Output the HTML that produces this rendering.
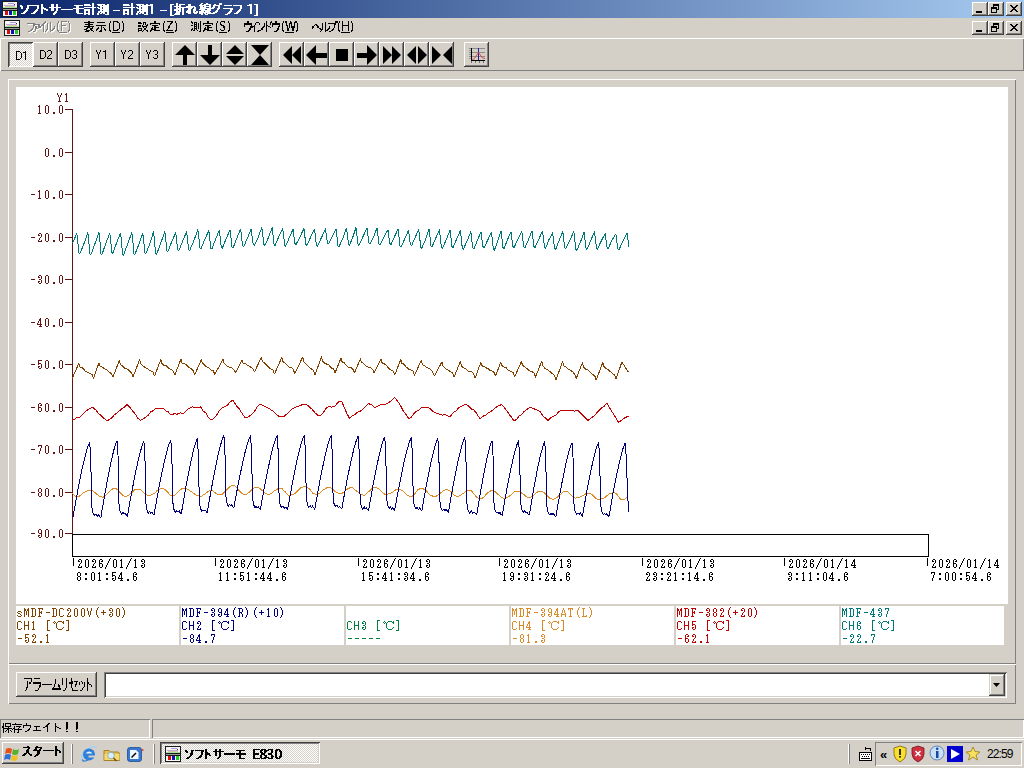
<!DOCTYPE html><html><head><meta charset="utf-8"><style>
*{margin:0;padding:0;box-sizing:border-box}
html,body{width:1024px;height:768px;overflow:hidden}
body{position:relative;background:#D4D0C8;font-family:"Liberation Sans",sans-serif;font-size:12px;color:#000}
.a{position:absolute}
.jt{position:absolute;display:block}
.t{white-space:pre;line-height:13px}
.btn{background:#D4D0C8;box-shadow:inset -1px -1px #404040,inset 1px 1px #fff,inset -2px -2px #808080}
.cbtn{background:#D4D0C8;box-shadow:inset -1px -1px #404040,inset 1px 1px #fff,inset -2px -2px #808080}
.sunk{box-shadow:inset 1px 1px #808080,inset -1px -1px #fff,inset 2px 2px #404040,inset -2px -2px #D4D0C8}
.traised{box-shadow:inset 1px 1px #fff,inset -1px -1px #808080}
.tsunk{box-shadow:inset 1px 1px #808080,inset -1px -1px #fff}
.pressed{box-shadow:inset 1px 1px #404040,inset -1px -1px #fff,inset 2px 2px #808080;background:conic-gradient(#fff 25%,#D4D0C8 0 50%,#fff 0 75%,#D4D0C8 0) 0 0/2px 2px}
.mono{font-family:"Liberation Mono",monospace;font-size:11.67px;line-height:13px;white-space:pre}
</style></head><body>

<div class="a" style="left:0px;top:0px;width:1024px;height:18px;background:linear-gradient(to right,#0A246A,#A6CAF0)"></div>
<svg class="a" style="left:2px;top:1px" width="16" height="16" shape-rendering="crispEdges">
<rect x="0" y="0" width="16" height="16" fill="#1a1a1a"/>
<rect x="1" y="1" width="14" height="6" fill="#f4f4f4"/>
<rect x="2" y="2" width="5" height="1" fill="#ffffff"/>
<rect x="6" y="2" width="6" height="1" fill="#a898d8"/>
<rect x="2" y="4" width="11" height="1" fill="#c0a8e0"/>
<rect x="3" y="5" width="10" height="1" fill="#d8c898"/>
<rect x="1" y="6" width="14" height="1" fill="#a8e0a0"/>
<rect x="12" y="3" width="1" height="1" fill="#402060"/>
<rect x="1" y="8" width="14" height="1" fill="#9a9a9a"/>
<rect x="1" y="10" width="14" height="5" fill="#f8f8f8"/>
<rect x="3" y="10" width="3" height="4" fill="#d01010"/>
<rect x="7" y="10" width="3" height="4" fill="#1010c0"/>
<rect x="11" y="10" width="3" height="4" fill="#20d020"/>
</svg>
<svg class="jt" style="left:20px;top:3px" width="238" height="13"><path fill="#fff" d="M72 0h2v1h-2zM111 0h2v1h-2zM156 0h2v1h-2zM181 0h2v1h-2zM186 0h2v1h-2zM199 0h3v1h-3zM21 1h2v1h-2zM31 1h3v1h-3zM36 1h2v1h-2zM64 1h6v1h-6zM72 1h2v1h-2zM77 1h8v1h-8zM87 1h2v1h-2zM103 1h6v1h-6zM111 1h2v1h-2zM116 1h8v1h-8zM126 1h2v1h-2zM130 1h3v1h-3zM150 1h4v1h-4zM156 1h2v1h-2zM159 1h6v1h-6zM168 1h3v1h-3zM180 1h2v1h-2zM184 1h7v1h-7zM194 1h2v1h-2zM199 1h3v1h-3zM229 1h3v1h-3zM234 1h4v1h-4zM0 2h2v1h-2zM7 2h12v1h-12zM21 2h2v1h-2zM31 2h3v1h-3zM36 2h2v1h-2zM54 2h9v1h-9zM64 2h7v1h-7zM72 2h2v1h-2zM78 2h4v1h-4zM83 2h6v1h-6zM103 2h7v1h-7zM111 2h2v1h-2zM117 2h4v1h-4zM122 2h11v1h-11zM150 2h2v1h-2zM156 2h2v1h-2zM159 2h2v1h-2zM168 2h3v1h-3zM179 2h7v1h-7zM189 2h2v1h-2zM193 2h7v1h-7zM204 2h8v1h-8zM213 2h9v1h-9zM227 2h5v1h-5zM236 2h2v1h-2zM0 3h3v1h-3zM7 3h2v1h-2zM17 3h2v1h-2zM21 3h2v1h-2zM31 3h3v1h-3zM36 3h2v1h-2zM56 3h3v1h-3zM72 3h2v1h-2zM80 3h9v1h-9zM111 3h2v1h-2zM119 3h9v1h-9zM131 3h2v1h-2zM150 3h2v1h-2zM154 3h7v1h-7zM166 3h9v1h-9zM180 3h3v1h-3zM184 3h7v1h-7zM193 3h2v1h-2zM198 3h2v1h-2zM220 3h2v1h-2zM230 3h2v1h-2zM236 3h2v1h-2zM1 4h2v1h-2zM7 4h2v1h-2zM17 4h2v1h-2zM21 4h3v1h-3zM29 4h12v1h-12zM56 4h3v1h-3zM64 4h12v1h-12zM77 4h2v1h-2zM80 4h2v1h-2zM83 4h6v1h-6zM103 4h12v1h-12zM116 4h2v1h-2zM119 4h2v1h-2zM122 4h6v1h-6zM131 4h2v1h-2zM150 4h2v1h-2zM156 4h2v1h-2zM159 4h14v1h-14zM174 4h2v1h-2zM180 4h6v1h-6zM189 4h2v1h-2zM192 4h3v1h-3zM198 4h2v1h-2zM220 4h2v1h-2zM230 4h2v1h-2zM236 4h2v1h-2zM1 5h2v1h-2zM6 5h3v1h-3zM17 5h2v1h-2zM21 5h5v1h-5zM31 5h3v1h-3zM36 5h2v1h-2zM53 5h11v1h-11zM72 5h2v1h-2zM78 5h4v1h-4zM83 5h6v1h-6zM111 5h2v1h-2zM117 5h4v1h-4zM122 5h6v1h-6zM131 5h2v1h-2zM150 5h2v1h-2zM156 5h5v1h-5zM162 5h2v1h-2zM168 5h4v1h-4zM174 5h2v1h-2zM180 5h14v1h-14zM197 5h3v1h-3zM203 5h10v1h-10zM220 5h2v1h-2zM230 5h2v1h-2zM236 5h2v1h-2zM6 6h2v1h-2zM16 6h2v1h-2zM21 6h2v1h-2zM24 6h4v1h-4zM31 6h3v1h-3zM36 6h2v1h-2zM41 6h12v1h-12zM56 6h3v1h-3zM64 6h6v1h-6zM72 6h2v1h-2zM80 6h9v1h-9zM103 6h6v1h-6zM111 6h2v1h-2zM119 6h9v1h-9zM131 6h2v1h-2zM150 6h2v1h-2zM154 6h7v1h-7zM162 6h2v1h-2zM168 6h3v1h-3zM173 6h3v1h-3zM179 6h6v1h-6zM187 6h4v1h-4zM197 6h2v1h-2zM210 6h3v1h-3zM219 6h2v1h-2zM230 6h2v1h-2zM236 6h2v1h-2zM5 7h3v1h-3zM15 7h3v1h-3zM21 7h2v1h-2zM26 7h2v1h-2zM31 7h3v1h-3zM36 7h2v1h-2zM56 7h3v1h-3zM64 7h6v1h-6zM72 7h2v1h-2zM80 7h2v1h-2zM83 7h6v1h-6zM93 7h7v1h-7zM103 7h6v1h-6zM111 7h2v1h-2zM119 7h2v1h-2zM122 7h6v1h-6zM131 7h2v1h-2zM140 7h7v1h-7zM150 7h2v1h-2zM154 7h4v1h-4zM159 7h2v1h-2zM162 7h2v1h-2zM167 7h4v1h-4zM173 7h3v1h-3zM181 7h10v1h-10zM196 7h2v1h-2zM210 7h2v1h-2zM218 7h3v1h-3zM230 7h2v1h-2zM236 7h2v1h-2zM4 8h3v1h-3zM14 8h3v1h-3zM21 8h2v1h-2zM35 8h2v1h-2zM56 8h3v1h-3zM64 8h2v1h-2zM68 8h2v1h-2zM72 8h2v1h-2zM78 8h11v1h-11zM103 8h2v1h-2zM107 8h2v1h-2zM111 8h2v1h-2zM117 8h11v1h-11zM131 8h2v1h-2zM150 8h2v1h-2zM156 8h5v1h-5zM162 8h2v1h-2zM166 8h5v1h-5zM173 8h2v1h-2zM176 8h2v1h-2zM179 8h5v1h-5zM185 8h5v1h-5zM195 8h3v1h-3zM209 8h3v1h-3zM217 8h3v1h-3zM230 8h2v1h-2zM236 8h2v1h-2zM3 9h3v1h-3zM13 9h3v1h-3zM21 9h2v1h-2zM34 9h3v1h-3zM56 9h3v1h-3zM64 9h2v1h-2zM68 9h2v1h-2zM72 9h2v1h-2zM78 9h2v1h-2zM81 9h4v1h-4zM87 9h2v1h-2zM103 9h2v1h-2zM107 9h2v1h-2zM111 9h2v1h-2zM117 9h2v1h-2zM120 9h4v1h-4zM126 9h2v1h-2zM131 9h2v1h-2zM150 9h2v1h-2zM156 9h4v1h-4zM162 9h2v1h-2zM166 9h5v1h-5zM173 9h5v1h-5zM179 9h12v1h-12zM193 9h4v1h-4zM208 9h3v1h-3zM216 9h3v1h-3zM230 9h2v1h-2zM236 9h2v1h-2zM1 10h4v1h-4zM11 10h4v1h-4zM21 10h2v1h-2zM33 10h3v1h-3zM57 10h6v1h-6zM64 10h6v1h-6zM72 10h2v1h-2zM77 10h2v1h-2zM80 10h2v1h-2zM83 10h2v1h-2zM87 10h2v1h-2zM103 10h6v1h-6zM111 10h2v1h-2zM116 10h2v1h-2zM119 10h2v1h-2zM122 10h2v1h-2zM126 10h2v1h-2zM131 10h2v1h-2zM150 10h2v1h-2zM155 10h5v1h-5zM162 10h2v1h-2zM168 10h3v1h-3zM174 10h3v1h-3zM179 10h4v1h-4zM184 10h2v1h-2zM187 10h8v1h-8zM207 10h3v1h-3zM214 10h4v1h-4zM230 10h2v1h-2zM236 10h2v1h-2zM33 11h2v1h-2zM64 11h2v1h-2zM68 11h2v1h-2zM72 11h2v1h-2zM77 11h2v1h-2zM85 11h4v1h-4zM103 11h2v1h-2zM107 11h2v1h-2zM111 11h2v1h-2zM116 11h2v1h-2zM124 11h4v1h-4zM150 11h2v1h-2zM154 11h6v1h-6zM162 11h2v1h-2zM181 11h2v1h-2zM185 11h3v1h-3zM205 11h3v1h-3zM236 11h2v1h-2zM150 12h4v1h-4zM234 12h4v1h-4z"/></svg>
<div class="a cbtn" style="left:972px;top:2px;width:16px;height:14px"></div>
<svg class="a" style="left:972px;top:2px" width="16" height="14" shape-rendering="crispEdges"><rect x="4" y="9" width="6" height="2" fill="#000"/></svg>
<div class="a cbtn" style="left:988px;top:2px;width:16px;height:14px"></div>
<svg class="a" style="left:988px;top:2px" width="16" height="14" shape-rendering="crispEdges"><rect x="5" y="2" width="6" height="2" fill="#000"/><rect x="10" y="4" width="1" height="4" fill="#000"/><rect x="9" y="7" width="1" height="1" fill="#000"/><rect x="5" y="4" width="1" height="1" fill="#000"/><rect x="3" y="5" width="6" height="2" fill="#000"/><rect x="3" y="7" width="1" height="4" fill="#000"/><rect x="8" y="7" width="1" height="4" fill="#000"/><rect x="3" y="10" width="6" height="1" fill="#000"/></svg>
<div class="a cbtn" style="left:1006px;top:2px;width:16px;height:14px"></div>
<svg class="a" style="left:1006px;top:2px" width="16" height="14" shape-rendering="crispEdges"><rect x="4" y="3" width="1" height="1" fill="#000"/><rect x="5" y="3" width="1" height="1" fill="#000"/><rect x="10" y="3" width="1" height="1" fill="#000"/><rect x="11" y="3" width="1" height="1" fill="#000"/><rect x="5" y="4" width="1" height="1" fill="#000"/><rect x="6" y="4" width="1" height="1" fill="#000"/><rect x="9" y="4" width="1" height="1" fill="#000"/><rect x="10" y="4" width="1" height="1" fill="#000"/><rect x="6" y="5" width="1" height="1" fill="#000"/><rect x="7" y="5" width="1" height="1" fill="#000"/><rect x="8" y="5" width="1" height="1" fill="#000"/><rect x="9" y="5" width="1" height="1" fill="#000"/><rect x="7" y="6" width="1" height="1" fill="#000"/><rect x="8" y="6" width="1" height="1" fill="#000"/><rect x="6" y="7" width="1" height="1" fill="#000"/><rect x="7" y="7" width="1" height="1" fill="#000"/><rect x="8" y="7" width="1" height="1" fill="#000"/><rect x="9" y="7" width="1" height="1" fill="#000"/><rect x="5" y="8" width="1" height="1" fill="#000"/><rect x="6" y="8" width="1" height="1" fill="#000"/><rect x="9" y="8" width="1" height="1" fill="#000"/><rect x="10" y="8" width="1" height="1" fill="#000"/><rect x="4" y="9" width="1" height="1" fill="#000"/><rect x="5" y="9" width="1" height="1" fill="#000"/><rect x="10" y="9" width="1" height="1" fill="#000"/><rect x="11" y="9" width="1" height="1" fill="#000"/></svg>
<svg class="a" style="left:4px;top:20px" width="16" height="16" shape-rendering="crispEdges">
<rect x="0" y="0" width="16" height="16" fill="#1a1a1a"/>
<rect x="1" y="1" width="14" height="6" fill="#f4f4f4"/>
<rect x="2" y="2" width="5" height="1" fill="#ffffff"/>
<rect x="6" y="2" width="6" height="1" fill="#a898d8"/>
<rect x="2" y="4" width="11" height="1" fill="#c0a8e0"/>
<rect x="3" y="5" width="10" height="1" fill="#d8c898"/>
<rect x="1" y="6" width="14" height="1" fill="#a8e0a0"/>
<rect x="12" y="3" width="1" height="1" fill="#402060"/>
<rect x="1" y="8" width="14" height="1" fill="#9a9a9a"/>
<rect x="1" y="10" width="14" height="5" fill="#f8f8f8"/>
<rect x="3" y="10" width="3" height="4" fill="#d01010"/>
<rect x="7" y="10" width="3" height="4" fill="#1010c0"/>
<rect x="11" y="10" width="3" height="4" fill="#20d020"/>
</svg>
<svg class="jt" style="left:28px;top:22px" width="28" height="11"><path fill="#fff" d="M18 0h1v1h-1zM17 1h2v1h-2zM23 1h1v1h-1zM0 2h8v1h-8zM16 2h2v1h-2zM20 2h1v1h-1zM23 2h1v1h-1zM6 3h7v1h-7zM15 3h2v1h-2zM20 3h1v1h-1zM23 3h1v1h-1zM6 4h2v1h-2zM11 4h2v1h-2zM14 4h3v1h-3zM20 4h1v1h-1zM23 4h1v1h-1zM6 5h1v1h-1zM8 5h2v1h-2zM11 5h3v1h-3zM16 5h1v1h-1zM20 5h1v1h-1zM23 5h1v1h-1zM27 5h1v1h-1zM6 6h1v1h-1zM8 6h2v1h-2zM11 6h3v1h-3zM16 6h1v1h-1zM20 6h1v1h-1zM23 6h1v1h-1zM27 6h1v1h-1zM5 7h1v1h-1zM8 7h3v1h-3zM16 7h1v1h-1zM20 7h1v1h-1zM23 7h1v1h-1zM26 7h2v1h-2zM4 8h2v1h-2zM8 8h1v1h-1zM16 8h1v1h-1zM19 8h2v1h-2zM23 8h1v1h-1zM25 8h2v1h-2zM3 9h2v1h-2zM8 9h1v1h-1zM16 9h1v1h-1zM19 9h1v1h-1zM23 9h3v1h-3zM1 10h2v1h-2zM6 10h2v1h-2zM16 10h1v1h-1zM18 10h1v1h-1zM23 10h1v1h-1z"/></svg>
<svg class="jt" style="left:58px;top:22px" width="13" height="11"><path fill="#fff" d="M1 0h1v1h-1zM4 0h6v1h-6zM11 0h1v1h-1zM1 1h1v1h-1zM4 1h1v1h-1zM11 1h1v1h-1zM0 2h1v1h-1zM4 2h1v1h-1zM12 2h1v1h-1zM0 3h1v1h-1zM4 3h1v1h-1zM12 3h1v1h-1zM0 4h1v1h-1zM4 4h5v1h-5zM12 4h1v1h-1zM0 5h1v1h-1zM4 5h1v1h-1zM12 5h1v1h-1zM0 6h1v1h-1zM4 6h1v1h-1zM12 6h1v1h-1zM0 7h1v1h-1zM4 7h1v1h-1zM12 7h1v1h-1zM0 8h1v1h-1zM4 8h1v1h-1zM12 8h1v1h-1zM0 9h2v1h-2zM4 9h1v1h-1zM11 9h2v1h-2zM1 10h1v1h-1zM11 10h1v1h-1z"/></svg>
<div class="a" style="left:60px;top:33px;width:8px;height:1px;background:#fff"></div>
<svg class="jt" style="left:27px;top:21px" width="28" height="11"><path fill="#808080" d="M18 0h1v1h-1zM17 1h2v1h-2zM23 1h1v1h-1zM0 2h8v1h-8zM16 2h2v1h-2zM20 2h1v1h-1zM23 2h1v1h-1zM6 3h7v1h-7zM15 3h2v1h-2zM20 3h1v1h-1zM23 3h1v1h-1zM6 4h2v1h-2zM11 4h2v1h-2zM14 4h3v1h-3zM20 4h1v1h-1zM23 4h1v1h-1zM6 5h1v1h-1zM8 5h2v1h-2zM11 5h3v1h-3zM16 5h1v1h-1zM20 5h1v1h-1zM23 5h1v1h-1zM27 5h1v1h-1zM6 6h1v1h-1zM8 6h2v1h-2zM11 6h3v1h-3zM16 6h1v1h-1zM20 6h1v1h-1zM23 6h1v1h-1zM27 6h1v1h-1zM5 7h1v1h-1zM8 7h3v1h-3zM16 7h1v1h-1zM20 7h1v1h-1zM23 7h1v1h-1zM26 7h2v1h-2zM4 8h2v1h-2zM8 8h1v1h-1zM16 8h1v1h-1zM19 8h2v1h-2zM23 8h1v1h-1zM25 8h2v1h-2zM3 9h2v1h-2zM8 9h1v1h-1zM16 9h1v1h-1zM19 9h1v1h-1zM23 9h3v1h-3zM1 10h2v1h-2zM6 10h2v1h-2zM16 10h1v1h-1zM18 10h1v1h-1zM23 10h1v1h-1z"/></svg>
<svg class="jt" style="left:57px;top:21px" width="13" height="11"><path fill="#808080" d="M1 0h1v1h-1zM4 0h6v1h-6zM11 0h1v1h-1zM1 1h1v1h-1zM4 1h1v1h-1zM11 1h1v1h-1zM0 2h1v1h-1zM4 2h1v1h-1zM12 2h1v1h-1zM0 3h1v1h-1zM4 3h1v1h-1zM12 3h1v1h-1zM0 4h1v1h-1zM4 4h5v1h-5zM12 4h1v1h-1zM0 5h1v1h-1zM4 5h1v1h-1zM12 5h1v1h-1zM0 6h1v1h-1zM4 6h1v1h-1zM12 6h1v1h-1zM0 7h1v1h-1zM4 7h1v1h-1zM12 7h1v1h-1zM0 8h1v1h-1zM4 8h1v1h-1zM12 8h1v1h-1zM0 9h2v1h-2zM4 9h1v1h-1zM11 9h2v1h-2zM1 10h1v1h-1zM11 10h1v1h-1z"/></svg>
<div class="a" style="left:59px;top:32px;width:8px;height:1px;background:#808080"></div>
<svg class="jt" style="left:84px;top:21px" width="22" height="11"><path fill="#000" d="M4 0h2v1h-2zM0 1h10v1h-10zM13 1h8v1h-8zM4 2h2v1h-2zM1 3h8v1h-8zM4 4h2v1h-2zM12 4h10v1h-10zM0 5h10v1h-10zM17 5h1v1h-1zM3 6h3v1h-3zM8 6h1v1h-1zM14 6h1v1h-1zM17 6h1v1h-1zM19 6h1v1h-1zM2 7h2v1h-2zM6 7h3v1h-3zM13 7h2v1h-2zM17 7h1v1h-1zM20 7h1v1h-1zM0 8h3v1h-3zM6 8h2v1h-2zM12 8h2v1h-2zM17 8h1v1h-1zM20 8h2v1h-2zM2 9h4v1h-4zM7 9h2v1h-2zM12 9h1v1h-1zM16 9h2v1h-2zM21 9h1v1h-1zM1 10h4v1h-4zM9 10h1v1h-1zM15 10h3v1h-3z"/></svg>
<svg class="jt" style="left:109px;top:21px" width="15" height="11"><path fill="#000" d="M1 0h1v1h-1zM4 0h5v1h-5zM13 0h1v1h-1zM1 1h1v1h-1zM4 1h1v1h-1zM8 1h2v1h-2zM13 1h1v1h-1zM0 2h1v1h-1zM4 2h1v1h-1zM10 2h1v1h-1zM14 2h1v1h-1zM0 3h1v1h-1zM4 3h1v1h-1zM10 3h1v1h-1zM14 3h1v1h-1zM0 4h1v1h-1zM4 4h1v1h-1zM10 4h1v1h-1zM14 4h1v1h-1zM0 5h1v1h-1zM4 5h1v1h-1zM10 5h1v1h-1zM14 5h1v1h-1zM0 6h1v1h-1zM4 6h1v1h-1zM10 6h1v1h-1zM14 6h1v1h-1zM0 7h1v1h-1zM4 7h1v1h-1zM10 7h1v1h-1zM14 7h1v1h-1zM0 8h1v1h-1zM4 8h1v1h-1zM8 8h2v1h-2zM14 8h1v1h-1zM0 9h2v1h-2zM4 9h5v1h-5zM13 9h2v1h-2zM1 10h1v1h-1zM13 10h1v1h-1z"/></svg>
<div class="a" style="left:112px;top:32px;width:8px;height:1px;background:#000"></div>
<svg class="jt" style="left:138px;top:21px" width="22" height="11"><path fill="#000" d="M16 0h2v1h-2zM0 1h3v1h-3zM5 1h3v1h-3zM16 1h2v1h-2zM0 2h4v1h-4zM5 2h1v1h-1zM7 2h1v1h-1zM12 2h10v1h-10zM5 3h1v1h-1zM7 3h1v1h-1zM9 3h1v1h-1zM12 3h1v1h-1zM21 3h1v1h-1zM0 4h3v1h-3zM4 4h1v1h-1zM8 4h2v1h-2zM14 4h6v1h-6zM0 5h3v1h-3zM4 5h5v1h-5zM16 5h2v1h-2zM5 6h1v1h-1zM8 6h1v1h-1zM14 6h1v1h-1zM16 6h5v1h-5zM0 7h4v1h-4zM6 7h2v1h-2zM13 7h2v1h-2zM16 7h2v1h-2zM0 8h1v1h-1zM3 8h1v1h-1zM6 8h2v1h-2zM13 8h5v1h-5zM0 9h4v1h-4zM5 9h1v1h-1zM8 9h2v1h-2zM12 9h2v1h-2zM16 9h6v1h-6zM0 10h1v1h-1zM4 10h1v1h-1zM9 10h1v1h-1zM12 10h1v1h-1z"/></svg>
<svg class="jt" style="left:163px;top:21px" width="14" height="11"><path fill="#000" d="M1 0h1v1h-1zM4 0h6v1h-6zM12 0h1v1h-1zM1 1h1v1h-1zM8 1h2v1h-2zM12 1h1v1h-1zM0 2h1v1h-1zM7 2h2v1h-2zM13 2h1v1h-1zM0 3h1v1h-1zM7 3h1v1h-1zM13 3h1v1h-1zM0 4h1v1h-1zM6 4h1v1h-1zM13 4h1v1h-1zM0 5h1v1h-1zM5 5h2v1h-2zM13 5h1v1h-1zM0 6h1v1h-1zM5 6h2v1h-2zM13 6h1v1h-1zM0 7h1v1h-1zM5 7h1v1h-1zM13 7h1v1h-1zM0 8h1v1h-1zM4 8h1v1h-1zM13 8h1v1h-1zM0 9h2v1h-2zM3 9h7v1h-7zM12 9h2v1h-2zM1 10h1v1h-1zM12 10h1v1h-1z"/></svg>
<div class="a" style="left:166px;top:32px;width:8px;height:1px;background:#000"></div>
<svg class="jt" style="left:191px;top:21px" width="22" height="11"><path fill="#000" d="M0 0h1v1h-1zM9 0h1v1h-1zM16 0h2v1h-2zM0 1h2v1h-2zM3 1h3v1h-3zM9 1h1v1h-1zM16 1h2v1h-2zM1 2h1v1h-1zM3 2h1v1h-1zM5 2h1v1h-1zM7 2h1v1h-1zM9 2h1v1h-1zM12 2h10v1h-10zM3 3h3v1h-3zM7 3h1v1h-1zM9 3h1v1h-1zM12 3h1v1h-1zM21 3h1v1h-1zM0 4h2v1h-2zM3 4h1v1h-1zM5 4h1v1h-1zM7 4h1v1h-1zM9 4h1v1h-1zM14 4h6v1h-6zM3 5h3v1h-3zM7 5h1v1h-1zM9 5h1v1h-1zM16 5h2v1h-2zM3 6h1v1h-1zM5 6h1v1h-1zM7 6h1v1h-1zM9 6h1v1h-1zM14 6h1v1h-1zM16 6h5v1h-5zM1 7h1v1h-1zM3 7h3v1h-3zM7 7h1v1h-1zM9 7h1v1h-1zM13 7h2v1h-2zM16 7h2v1h-2zM0 8h2v1h-2zM3 8h1v1h-1zM5 8h1v1h-1zM9 8h1v1h-1zM13 8h5v1h-5zM0 9h1v1h-1zM2 9h2v1h-2zM6 9h1v1h-1zM9 9h1v1h-1zM12 9h2v1h-2zM16 9h6v1h-6zM8 10h2v1h-2zM12 10h1v1h-1z"/></svg>
<svg class="jt" style="left:216px;top:21px" width="14" height="11"><path fill="#000" d="M1 0h1v1h-1zM5 0h4v1h-4zM12 0h1v1h-1zM1 1h1v1h-1zM4 1h1v1h-1zM8 1h1v1h-1zM12 1h1v1h-1zM0 2h1v1h-1zM4 2h1v1h-1zM13 2h1v1h-1zM0 3h1v1h-1zM4 3h2v1h-2zM13 3h1v1h-1zM0 4h1v1h-1zM5 4h3v1h-3zM13 4h1v1h-1zM0 5h1v1h-1zM7 5h2v1h-2zM13 5h1v1h-1zM0 6h1v1h-1zM7 6h2v1h-2zM13 6h1v1h-1zM0 7h1v1h-1zM8 7h1v1h-1zM13 7h1v1h-1zM0 8h1v1h-1zM4 8h1v1h-1zM8 8h1v1h-1zM13 8h1v1h-1zM0 9h2v1h-2zM5 9h3v1h-3zM12 9h2v1h-2zM1 10h1v1h-1zM12 10h1v1h-1z"/></svg>
<div class="a" style="left:219px;top:32px;width:8px;height:1px;background:#000"></div>
<svg class="jt" style="left:244px;top:21px" width="36" height="11"><path fill="#000" d="M3 0h2v1h-2zM22 0h1v1h-1zM27 0h1v1h-1zM31 0h2v1h-2zM3 1h2v1h-2zM12 1h3v1h-3zM22 1h1v1h-1zM26 1h2v1h-2zM31 1h2v1h-2zM0 2h8v1h-8zM11 2h1v1h-1zM15 2h1v1h-1zM20 2h1v1h-1zM22 2h1v1h-1zM26 2h1v1h-1zM28 2h8v1h-8zM0 3h8v1h-8zM11 3h1v1h-1zM15 3h1v1h-1zM20 3h1v1h-1zM22 3h1v1h-1zM26 3h1v1h-1zM28 3h8v1h-8zM0 4h1v1h-1zM7 4h1v1h-1zM10 4h1v1h-1zM20 4h1v1h-1zM22 4h2v1h-2zM28 4h1v1h-1zM35 4h1v1h-1zM0 5h1v1h-1zM6 5h5v1h-5zM19 5h2v1h-2zM22 5h1v1h-1zM24 5h2v1h-2zM28 5h1v1h-1zM34 5h2v1h-2zM6 6h3v1h-3zM10 6h1v1h-1zM18 6h2v1h-2zM22 6h1v1h-1zM26 6h1v1h-1zM34 6h1v1h-1zM5 7h2v1h-2zM10 7h1v1h-1zM17 7h2v1h-2zM22 7h1v1h-1zM33 7h2v1h-2zM5 8h2v1h-2zM10 8h1v1h-1zM17 8h2v1h-2zM22 8h1v1h-1zM33 8h2v1h-2zM4 9h2v1h-2zM10 9h1v1h-1zM14 9h3v1h-3zM22 9h1v1h-1zM32 9h2v1h-2zM2 10h3v1h-3zM10 10h1v1h-1zM13 10h2v1h-2zM22 10h1v1h-1zM30 10h3v1h-3z"/></svg>
<svg class="jt" style="left:282px;top:21px" width="16" height="11"><path fill="#000" d="M1 0h1v1h-1zM3 0h2v1h-2zM8 0h1v1h-1zM13 0h2v1h-2zM1 1h1v1h-1zM3 1h2v1h-2zM8 1h2v1h-2zM12 1h3v1h-3zM0 2h1v1h-1zM4 2h1v1h-1zM7 2h3v1h-3zM12 2h1v1h-1zM15 2h1v1h-1zM0 3h1v1h-1zM4 3h1v1h-1zM7 3h1v1h-1zM9 3h1v1h-1zM12 3h1v1h-1zM15 3h1v1h-1zM0 4h1v1h-1zM4 4h2v1h-2zM7 4h1v1h-1zM9 4h1v1h-1zM12 4h1v1h-1zM15 4h1v1h-1zM0 5h1v1h-1zM5 5h1v1h-1zM7 5h1v1h-1zM9 5h4v1h-4zM15 5h1v1h-1zM0 6h1v1h-1zM5 6h1v1h-1zM7 6h1v1h-1zM9 6h4v1h-4zM15 6h1v1h-1zM0 7h1v1h-1zM5 7h2v1h-2zM10 7h2v1h-2zM15 7h1v1h-1zM0 8h1v1h-1zM5 8h2v1h-2zM10 8h2v1h-2zM15 8h1v1h-1zM0 9h2v1h-2zM5 9h2v1h-2zM10 9h2v1h-2zM14 9h2v1h-2zM1 10h1v1h-1zM14 10h1v1h-1z"/></svg>
<div class="a" style="left:285px;top:32px;width:9px;height:1px;background:#000"></div>
<svg class="jt" style="left:312px;top:21px" width="26" height="11"><path fill="#000" d="M23 0h3v1h-3zM13 1h1v1h-1zM23 1h3v1h-3zM10 2h1v1h-1zM13 2h1v1h-1zM16 2h8v1h-8zM3 3h2v1h-2zM10 3h1v1h-1zM13 3h1v1h-1zM22 3h2v1h-2zM2 4h1v1h-1zM4 4h2v1h-2zM10 4h1v1h-1zM13 4h1v1h-1zM22 4h1v1h-1zM0 5h2v1h-2zM5 5h2v1h-2zM10 5h1v1h-1zM13 5h1v1h-1zM17 5h1v1h-1zM22 5h1v1h-1zM0 6h2v1h-2zM5 6h2v1h-2zM10 6h1v1h-1zM13 6h1v1h-1zM17 6h1v1h-1zM22 6h1v1h-1zM0 7h1v1h-1zM7 7h2v1h-2zM10 7h1v1h-1zM13 7h1v1h-1zM16 7h2v1h-2zM21 7h1v1h-1zM8 8h3v1h-3zM13 8h1v1h-1zM15 8h2v1h-2zM20 8h2v1h-2zM9 9h1v1h-1zM13 9h3v1h-3zM19 9h2v1h-2zM8 10h1v1h-1zM13 10h1v1h-1zM17 10h2v1h-2z"/></svg>
<svg class="jt" style="left:338px;top:21px" width="15" height="11"><path fill="#000" d="M1 0h1v1h-1zM4 0h1v1h-1zM10 0h1v1h-1zM13 0h1v1h-1zM1 1h1v1h-1zM4 1h1v1h-1zM10 1h1v1h-1zM13 1h1v1h-1zM0 2h1v1h-1zM4 2h1v1h-1zM10 2h1v1h-1zM14 2h1v1h-1zM0 3h1v1h-1zM4 3h1v1h-1zM10 3h1v1h-1zM14 3h1v1h-1zM0 4h1v1h-1zM4 4h7v1h-7zM14 4h1v1h-1zM0 5h1v1h-1zM4 5h1v1h-1zM10 5h1v1h-1zM14 5h1v1h-1zM0 6h1v1h-1zM4 6h1v1h-1zM10 6h1v1h-1zM14 6h1v1h-1zM0 7h1v1h-1zM4 7h1v1h-1zM10 7h1v1h-1zM14 7h1v1h-1zM0 8h1v1h-1zM4 8h1v1h-1zM10 8h1v1h-1zM14 8h1v1h-1zM0 9h2v1h-2zM4 9h1v1h-1zM10 9h1v1h-1zM13 9h2v1h-2zM1 10h1v1h-1zM13 10h1v1h-1z"/></svg>
<div class="a" style="left:341px;top:32px;width:9px;height:1px;background:#000"></div>
<div class="a cbtn" style="left:972px;top:21px;width:16px;height:14px"></div>
<svg class="a" style="left:972px;top:21px" width="16" height="14" shape-rendering="crispEdges"><rect x="4" y="9" width="6" height="2" fill="#000"/></svg>
<div class="a cbtn" style="left:988px;top:21px;width:16px;height:14px"></div>
<svg class="a" style="left:988px;top:21px" width="16" height="14" shape-rendering="crispEdges"><rect x="5" y="2" width="6" height="2" fill="#000"/><rect x="10" y="4" width="1" height="4" fill="#000"/><rect x="9" y="7" width="1" height="1" fill="#000"/><rect x="5" y="4" width="1" height="1" fill="#000"/><rect x="3" y="5" width="6" height="2" fill="#000"/><rect x="3" y="7" width="1" height="4" fill="#000"/><rect x="8" y="7" width="1" height="4" fill="#000"/><rect x="3" y="10" width="6" height="1" fill="#000"/></svg>
<div class="a cbtn" style="left:1006px;top:21px;width:16px;height:14px"></div>
<svg class="a" style="left:1006px;top:21px" width="16" height="14" shape-rendering="crispEdges"><rect x="4" y="3" width="1" height="1" fill="#000"/><rect x="5" y="3" width="1" height="1" fill="#000"/><rect x="10" y="3" width="1" height="1" fill="#000"/><rect x="11" y="3" width="1" height="1" fill="#000"/><rect x="5" y="4" width="1" height="1" fill="#000"/><rect x="6" y="4" width="1" height="1" fill="#000"/><rect x="9" y="4" width="1" height="1" fill="#000"/><rect x="10" y="4" width="1" height="1" fill="#000"/><rect x="6" y="5" width="1" height="1" fill="#000"/><rect x="7" y="5" width="1" height="1" fill="#000"/><rect x="8" y="5" width="1" height="1" fill="#000"/><rect x="9" y="5" width="1" height="1" fill="#000"/><rect x="7" y="6" width="1" height="1" fill="#000"/><rect x="8" y="6" width="1" height="1" fill="#000"/><rect x="6" y="7" width="1" height="1" fill="#000"/><rect x="7" y="7" width="1" height="1" fill="#000"/><rect x="8" y="7" width="1" height="1" fill="#000"/><rect x="9" y="7" width="1" height="1" fill="#000"/><rect x="5" y="8" width="1" height="1" fill="#000"/><rect x="6" y="8" width="1" height="1" fill="#000"/><rect x="9" y="8" width="1" height="1" fill="#000"/><rect x="10" y="8" width="1" height="1" fill="#000"/><rect x="4" y="9" width="1" height="1" fill="#000"/><rect x="5" y="9" width="1" height="1" fill="#000"/><rect x="10" y="9" width="1" height="1" fill="#000"/><rect x="11" y="9" width="1" height="1" fill="#000"/></svg>
<div class="a traised" style="left:0px;top:38px;width:1024px;height:33px;"></div>
<div class="a pressed" style="left:8px;top:42px;width:25px;height:25px"></div>
<div class="a btn" style="left:33px;top:42px;width:25px;height:25px;"></div>
<div class="a btn" style="left:58px;top:42px;width:25px;height:25px;"></div>
<div class="a btn" style="left:90px;top:42px;width:25px;height:25px;"></div>
<div class="a btn" style="left:115px;top:42px;width:25px;height:25px;"></div>
<div class="a btn" style="left:140px;top:42px;width:25px;height:25px;"></div>
<div class="a btn" style="left:172px;top:42px;width:25px;height:25px;"></div>
<div class="a btn" style="left:197px;top:42px;width:25px;height:25px;"></div>
<div class="a btn" style="left:222px;top:42px;width:25px;height:25px;"></div>
<div class="a btn" style="left:247px;top:42px;width:25px;height:25px;"></div>
<div class="a btn" style="left:279px;top:42px;width:25px;height:25px;"></div>
<div class="a btn" style="left:304px;top:42px;width:25px;height:25px;"></div>
<div class="a btn" style="left:329px;top:42px;width:25px;height:25px;"></div>
<div class="a btn" style="left:354px;top:42px;width:25px;height:25px;"></div>
<div class="a btn" style="left:379px;top:42px;width:25px;height:25px;"></div>
<div class="a btn" style="left:404px;top:42px;width:25px;height:25px;"></div>
<div class="a btn" style="left:429px;top:42px;width:25px;height:25px;"></div>
<div class="a btn" style="left:464px;top:42px;width:25px;height:25px;"></div>
<svg class="jt" style="left:16px;top:50px" width="142" height="10"><path fill="#000" d="M24 0h4v1h-4zM32 0h3v1h-3zM49 0h4v1h-4zM57 0h3v1h-3zM80 0h1v1h-1zM84 0h1v1h-1zM89 0h1v1h-1zM105 0h1v1h-1zM109 0h1v1h-1zM113 0h3v1h-3zM130 0h1v1h-1zM134 0h1v1h-1zM138 0h3v1h-3zM0 1h4v1h-4zM9 1h1v1h-1zM24 1h1v1h-1zM28 1h1v1h-1zM31 1h1v1h-1zM35 1h1v1h-1zM49 1h1v1h-1zM53 1h1v1h-1zM56 1h1v1h-1zM60 1h1v1h-1zM80 1h1v1h-1zM84 1h1v1h-1zM87 1h3v1h-3zM105 1h1v1h-1zM109 1h1v1h-1zM112 1h1v1h-1zM116 1h1v1h-1zM130 1h1v1h-1zM134 1h1v1h-1zM137 1h1v1h-1zM141 1h1v1h-1zM0 2h1v1h-1zM4 2h1v1h-1zM7 2h3v1h-3zM24 2h1v1h-1zM29 2h1v1h-1zM35 2h1v1h-1zM49 2h1v1h-1zM54 2h1v1h-1zM60 2h1v1h-1zM81 2h1v1h-1zM83 2h1v1h-1zM89 2h1v1h-1zM106 2h1v1h-1zM108 2h1v1h-1zM116 2h1v1h-1zM131 2h1v1h-1zM133 2h1v1h-1zM141 2h1v1h-1zM0 3h1v1h-1zM5 3h1v1h-1zM9 3h1v1h-1zM24 3h1v1h-1zM29 3h1v1h-1zM35 3h1v1h-1zM49 3h1v1h-1zM54 3h1v1h-1zM60 3h1v1h-1zM81 3h1v1h-1zM83 3h1v1h-1zM89 3h1v1h-1zM106 3h1v1h-1zM108 3h1v1h-1zM116 3h1v1h-1zM131 3h1v1h-1zM133 3h1v1h-1zM141 3h1v1h-1zM0 4h1v1h-1zM5 4h1v1h-1zM9 4h1v1h-1zM24 4h1v1h-1zM29 4h1v1h-1zM34 4h1v1h-1zM49 4h1v1h-1zM54 4h1v1h-1zM58 4h2v1h-2zM82 4h1v1h-1zM89 4h1v1h-1zM107 4h1v1h-1zM115 4h1v1h-1zM132 4h1v1h-1zM139 4h2v1h-2zM0 5h1v1h-1zM5 5h1v1h-1zM9 5h1v1h-1zM24 5h1v1h-1zM29 5h1v1h-1zM33 5h1v1h-1zM49 5h1v1h-1zM54 5h1v1h-1zM60 5h1v1h-1zM82 5h1v1h-1zM89 5h1v1h-1zM107 5h1v1h-1zM114 5h1v1h-1zM132 5h1v1h-1zM141 5h1v1h-1zM0 6h1v1h-1zM5 6h1v1h-1zM9 6h1v1h-1zM24 6h1v1h-1zM29 6h1v1h-1zM32 6h1v1h-1zM49 6h1v1h-1zM54 6h1v1h-1zM60 6h1v1h-1zM82 6h1v1h-1zM89 6h1v1h-1zM107 6h1v1h-1zM113 6h1v1h-1zM132 6h1v1h-1zM141 6h1v1h-1zM0 7h1v1h-1zM5 7h1v1h-1zM9 7h1v1h-1zM24 7h1v1h-1zM28 7h1v1h-1zM31 7h1v1h-1zM49 7h1v1h-1zM53 7h1v1h-1zM56 7h1v1h-1zM60 7h1v1h-1zM82 7h1v1h-1zM89 7h1v1h-1zM107 7h1v1h-1zM112 7h1v1h-1zM132 7h1v1h-1zM137 7h1v1h-1zM141 7h1v1h-1zM0 8h1v1h-1zM4 8h1v1h-1zM9 8h1v1h-1zM24 8h4v1h-4zM31 8h5v1h-5zM49 8h4v1h-4zM57 8h3v1h-3zM82 8h1v1h-1zM89 8h1v1h-1zM107 8h1v1h-1zM112 8h5v1h-5zM132 8h1v1h-1zM138 8h3v1h-3zM0 9h4v1h-4zM9 9h1v1h-1z"/></svg>
<svg class="a" style="left:0;top:0" width="1024" height="80"><g fill="#000">
<path d="M175 55 L185 45 L195 55 Z M183 55 h4 v10 h-4 Z"/>
<path d="M200 55 L220 55 L210 65 Z M208 45 h4 v10 h-4 Z"/>
<path d="M226 54 L235 45 L244 54 Z M226 56 L244 56 L235 65 Z"/>
<path d="M251 45 L269 45 L260 55 Z M251 65 L269 65 L260 55 Z"/>
<path d="M283 55 L292 46 L292 64 Z M292 55 L301 46 L301 64 Z"/>
<path d="M306 55 L316 45 L316 65 Z M316 53 h11 v5 h-11 Z"/>
<path d="M336 49 h12 v12 h-12 Z"/>
<path d="M357 53 h10 v5 h-10 Z M367 45 L377 55 L367 65 Z"/>
<path d="M383 46 L392 55 L383 64 Z M392 46 L401 55 L392 64 Z"/>
<path d="M407 55 L416 46 L416 64 Z M418 46 L427 55 L418 64 Z"/>
<path d="M432 46 L441 55 L432 64 Z M452 46 L443 55 L452 64 Z"/>
</g><g shape-rendering="crispEdges"><rect x="469" y="48" width="16" height="1" fill="#8a8a8a"/><rect x="469" y="52" width="16" height="1" fill="#8a8a8a"/><rect x="469" y="56" width="16" height="1" fill="#8a8a8a"/><rect x="469" y="50" width="2" height="1" fill="#9a9a9a"/><rect x="469" y="54" width="2" height="1" fill="#9a9a9a"/><rect x="469" y="58" width="2" height="1" fill="#9a9a9a"/><rect x="471" y="48" width="1" height="13" fill="#000"/><rect x="471" y="60" width="14" height="1" fill="#000"/><rect x="471" y="61" width="1" height="2" fill="#707070"/><rect x="475" y="61" width="1" height="2" fill="#707070"/><rect x="479" y="61" width="1" height="2" fill="#707070"/><rect x="483" y="61" width="1" height="2" fill="#707070"/><rect x="478" y="48" width="1" height="12" fill="#20209a"/></g><path d="M472 59.5 L474.5 58.5 L478.5 52.5 L482.5 58 L485 58.5" stroke="#e04848" fill="none" stroke-width="1"/></svg>
<div class="a traised" style="left:8px;top:79px;width:1008px;height:585px;"></div>
<div class="a" style="left:16px;top:87px;width:992px;height:517px;background:#fff"></div>
<div class="a" style="left:16px;top:606px;width:163px;height:39px;background:#fff"></div>
<div class="a" style="left:181px;top:606px;width:163px;height:39px;background:#fff"></div>
<div class="a" style="left:346px;top:606px;width:163px;height:39px;background:#fff"></div>
<div class="a" style="left:511px;top:606px;width:163px;height:39px;background:#fff"></div>
<div class="a" style="left:676px;top:606px;width:163px;height:39px;background:#fff"></div>
<div class="a" style="left:841px;top:606px;width:163px;height:39px;background:#fff"></div>
<div class="a traised" style="left:8px;top:664px;width:1008px;height:40px;"></div>
<div class="a btn" style="left:16px;top:672px;width:81px;height:25px;"></div>
<svg class="jt" style="left:24px;top:678px" width="68" height="13"><path fill="#000" d="M0 0h8v1h-8zM10 0h6v1h-6zM38 0h1v1h-1zM42 0h1v1h-1zM47 0h1v1h-1zM63 0h1v1h-1zM7 1h1v1h-1zM31 1h1v1h-1zM38 1h1v1h-1zM42 1h1v1h-1zM47 1h1v1h-1zM63 1h1v1h-1zM7 2h1v1h-1zM31 2h1v1h-1zM38 2h1v1h-1zM42 2h1v1h-1zM47 2h1v1h-1zM63 2h1v1h-1zM3 3h1v1h-1zM7 3h1v1h-1zM31 3h1v1h-1zM38 3h1v1h-1zM42 3h1v1h-1zM47 3h2v1h-2zM50 3h4v1h-4zM57 3h1v1h-1zM63 3h1v1h-1zM3 4h1v1h-1zM5 4h2v1h-2zM9 4h8v1h-8zM31 4h1v1h-1zM38 4h1v1h-1zM42 4h1v1h-1zM45 4h4v1h-4zM52 4h1v1h-1zM55 4h1v1h-1zM58 4h1v1h-1zM60 4h1v1h-1zM63 4h2v1h-2zM3 5h1v1h-1zM5 5h2v1h-2zM9 5h8v1h-8zM31 5h1v1h-1zM38 5h1v1h-1zM42 5h1v1h-1zM45 5h4v1h-4zM52 5h1v1h-1zM55 5h1v1h-1zM58 5h1v1h-1zM60 5h1v1h-1zM63 5h2v1h-2zM3 6h1v1h-1zM16 6h1v1h-1zM18 6h10v1h-10zM30 6h1v1h-1zM34 6h1v1h-1zM38 6h1v1h-1zM42 6h1v1h-1zM47 6h1v1h-1zM51 6h2v1h-2zM55 6h1v1h-1zM60 6h1v1h-1zM63 6h1v1h-1zM65 6h2v1h-2zM3 7h1v1h-1zM15 7h2v1h-2zM30 7h1v1h-1zM34 7h2v1h-2zM42 7h1v1h-1zM47 7h1v1h-1zM51 7h1v1h-1zM60 7h1v1h-1zM63 7h1v1h-1zM67 7h1v1h-1zM3 8h1v1h-1zM15 8h2v1h-2zM30 8h1v1h-1zM34 8h2v1h-2zM42 8h1v1h-1zM47 8h1v1h-1zM51 8h1v1h-1zM60 8h1v1h-1zM63 8h1v1h-1zM67 8h1v1h-1zM2 9h2v1h-2zM15 9h1v1h-1zM29 9h1v1h-1zM35 9h1v1h-1zM42 9h1v1h-1zM47 9h1v1h-1zM59 9h1v1h-1zM63 9h1v1h-1zM2 10h1v1h-1zM14 10h1v1h-1zM28 10h9v1h-9zM41 10h1v1h-1zM48 10h1v1h-1zM58 10h1v1h-1zM63 10h1v1h-1zM2 11h1v1h-1zM14 11h1v1h-1zM28 11h9v1h-9zM41 11h1v1h-1zM48 11h1v1h-1zM58 11h1v1h-1zM63 11h1v1h-1zM1 12h1v1h-1zM11 12h3v1h-3zM39 12h2v1h-2zM48 12h6v1h-6zM56 12h2v1h-2zM63 12h1v1h-1z"/></svg>
<div class="a sunk" style="left:104px;top:672px;width:903px;height:26px;background:#fff"></div>
<div class="a" style="left:989px;top:674px;width:16px;height:22px;background:#D4D0C8;box-shadow:inset -1px -1px #404040,inset 1px 1px #D4D0C8,inset -2px -2px #808080,inset 2px 2px #fff"></div>
<svg class="a" style="left:989px;top:674px" width="16" height="21"><path d="M4 9 h7 l-3.5 4 z" fill="#000"/></svg>
<div class="a tsunk" style="left:0px;top:719px;width:150px;height:19px;"></div>
<div class="a tsunk" style="left:152px;top:719px;width:872px;height:19px;"></div>
<svg class="jt" style="left:2px;top:722px" width="76" height="11"><path fill="#000" d="M64 0h2v1h-2zM74 0h2v1h-2zM1 1h1v1h-1zM3 1h6v1h-6zM13 1h1v1h-1zM24 1h1v1h-1zM46 1h2v1h-2zM53 1h1v1h-1zM64 1h2v1h-2zM74 1h2v1h-2zM1 2h1v1h-1zM3 2h1v1h-1zM8 2h1v1h-1zM10 2h10v1h-10zM24 2h1v1h-1zM45 2h2v1h-2zM53 2h1v1h-1zM64 2h2v1h-2zM74 2h2v1h-2zM1 3h1v1h-1zM3 3h1v1h-1zM8 3h1v1h-1zM21 3h8v1h-8zM44 3h2v1h-2zM53 3h1v1h-1zM64 3h2v1h-2zM74 3h2v1h-2zM0 4h2v1h-2zM3 4h6v1h-6zM12 4h1v1h-1zM14 4h5v1h-5zM21 4h1v1h-1zM28 4h1v1h-1zM32 4h6v1h-6zM43 4h3v1h-3zM53 4h2v1h-2zM64 4h2v1h-2zM74 4h2v1h-2zM0 5h2v1h-2zM6 5h1v1h-1zM12 5h1v1h-1zM17 5h1v1h-1zM21 5h1v1h-1zM28 5h1v1h-1zM34 5h1v1h-1zM41 5h2v1h-2zM45 5h1v1h-1zM53 5h1v1h-1zM55 5h2v1h-2zM64 5h2v1h-2zM74 5h2v1h-2zM1 6h9v1h-9zM11 6h2v1h-2zM16 6h1v1h-1zM27 6h1v1h-1zM34 6h1v1h-1zM45 6h1v1h-1zM53 6h1v1h-1zM57 6h2v1h-2zM64 6h2v1h-2zM74 6h2v1h-2zM1 7h1v1h-1zM5 7h2v1h-2zM10 7h1v1h-1zM12 7h8v1h-8zM26 7h2v1h-2zM34 7h1v1h-1zM45 7h1v1h-1zM53 7h1v1h-1zM64 7h1v1h-1zM74 7h1v1h-1zM1 8h1v1h-1zM4 8h1v1h-1zM6 8h1v1h-1zM8 8h1v1h-1zM12 8h1v1h-1zM16 8h1v1h-1zM25 8h2v1h-2zM31 8h8v1h-8zM45 8h1v1h-1zM53 8h1v1h-1zM1 9h1v1h-1zM3 9h1v1h-1zM6 9h1v1h-1zM9 9h1v1h-1zM12 9h1v1h-1zM16 9h1v1h-1zM23 9h2v1h-2zM45 9h1v1h-1zM53 9h1v1h-1zM64 9h2v1h-2zM74 9h2v1h-2zM1 10h1v1h-1zM6 10h1v1h-1zM12 10h1v1h-1zM15 10h2v1h-2z"/></svg>
<div class="a" style="left:0px;top:738px;width:1024px;height:30px;background:#D4D0C8;box-shadow:inset 0 1px #D4D0C8,inset 0 2px #fff"></div>
<div class="a btn" style="left:2px;top:742px;width:62px;height:22px;"></div>
<svg class="jt" style="left:22px;top:746px" width="39" height="11"><path fill="#000" d="M5 0h2v1h-2zM14 0h2v1h-2zM33 0h2v1h-2zM1 1h7v1h-7zM13 1h7v1h-7zM33 1h2v1h-2zM6 2h2v1h-2zM13 2h2v1h-2zM18 2h2v1h-2zM33 2h2v1h-2zM5 3h2v1h-2zM12 3h3v1h-3zM17 3h2v1h-2zM33 3h3v1h-3zM4 4h3v1h-3zM11 4h8v1h-8zM21 4h11v1h-11zM33 4h5v1h-5zM4 5h3v1h-3zM15 5h3v1h-3zM33 5h2v1h-2zM37 5h2v1h-2zM4 6h3v1h-3zM15 6h3v1h-3zM33 6h2v1h-2zM37 6h2v1h-2zM2 7h3v1h-3zM6 7h2v1h-2zM15 7h3v1h-3zM33 7h2v1h-2zM1 8h3v1h-3zM7 8h3v1h-3zM14 8h3v1h-3zM33 8h2v1h-2zM0 9h3v1h-3zM8 9h2v1h-2zM13 9h3v1h-3zM33 9h2v1h-2zM12 10h2v1h-2z"/></svg>
<svg class="a" style="left:4px;top:745px" width="17" height="16">
<path d="M2 4 q3 -2 6 0 l-1 5 q-3 -2 -6 0 z" fill="#e8501a"/>
<path d="M9 4 q3 2 6 0 l-1 5 q-3 2 -6 0 z" fill="#58b030"/>
<path d="M1 10 q3 -2 6 0 l-1 5 q-3 -2 -6 0 z" fill="#3070d8"/>
<path d="M8 10 q3 2 6 0 l-1 5 q-3 2 -6 0 z" fill="#f0c020"/>
</svg>
<div class="a" style="left:71px;top:744px;width:2px;height:20px;box-shadow:inset 1px 0 #fff,inset -1px 0 #808080"></div>
<div class="a" style="left:153px;top:744px;width:2px;height:20px;box-shadow:inset 1px 0 #fff,inset -1px 0 #808080"></div>
<div class="a" style="left:848px;top:744px;width:2px;height:20px;box-shadow:inset 1px 0 #fff,inset -1px 0 #808080"></div>
<svg class="a" style="left:80px;top:745px" width="64" height="18">
<path d="M2.5 15.5 C0 13 3 6 9 3 C13 1 16 1 16 3" stroke="#a8d0f0" stroke-width="1.6" fill="none"/>
<circle cx="9" cy="9.5" r="6" fill="#2f80d8"/>
<path d="M5.5 8.5 q3.5 -4 7 0 z" fill="#e8f4ff"/>
<rect x="8.5" y="10.5" width="7" height="2" fill="#d4d0c8"/>
<path d="M3 14.5 C1.5 16.5 5 16.5 8 15" stroke="#2f80d8" stroke-width="1.3" fill="none"/>
<path d="M24 5.5 h5 l1.5 1.5 h8 l1 2 v6.5 h-15.5 z" fill="#e8c050" stroke="#a07818" stroke-width="0.9"/>
<path d="M24.5 9 h15 v6 h-15 z" fill="#f4d870"/>
<circle cx="31" cy="10.5" r="3.3" fill="#d8f0ff" stroke="#80a0b8" stroke-width="0.8"/>
<path d="M33.5 13 l3 3" stroke="#705010" stroke-width="1.5"/>
<rect x="47.5" y="2.5" width="14" height="14" rx="2.5" fill="#3a78d0" stroke="#1c4c98" stroke-width="0.8"/>
<path d="M50 5 h6 l2.5 2.5 v6.5 h-8.5 z" fill="#eef6ff"/>
<path d="M51.5 12.5 l4.5 -4.5" stroke="#000" stroke-width="1.4"/>
<circle cx="62.5" cy="5" r="1.1" fill="#e04020"/>
</svg>
<div class="a pressed" style="left:160px;top:742px;width:160px;height:22px;box-shadow:inset 1px 1px #404040,inset -1px -1px #fff,inset 2px 2px #808080,inset -2px -2px #D4D0C8"></div>
<svg class="a" style="left:165px;top:746px" width="16" height="16" shape-rendering="crispEdges">
<rect x="0" y="0" width="16" height="16" fill="#1a1a1a"/>
<rect x="1" y="1" width="14" height="6" fill="#f4f4f4"/>
<rect x="2" y="2" width="5" height="1" fill="#ffffff"/>
<rect x="6" y="2" width="6" height="1" fill="#a898d8"/>
<rect x="2" y="4" width="11" height="1" fill="#c0a8e0"/>
<rect x="3" y="5" width="10" height="1" fill="#d8c898"/>
<rect x="1" y="6" width="14" height="1" fill="#a8e0a0"/>
<rect x="12" y="3" width="1" height="1" fill="#402060"/>
<rect x="1" y="8" width="14" height="1" fill="#9a9a9a"/>
<rect x="1" y="10" width="14" height="5" fill="#f8f8f8"/>
<rect x="3" y="10" width="3" height="4" fill="#d01010"/>
<rect x="7" y="10" width="3" height="4" fill="#1010c0"/>
<rect x="11" y="10" width="3" height="4" fill="#20d020"/>
</svg>
<svg class="jt" style="left:185px;top:749px" width="97" height="10"><path fill="#000" d="M20 0h2v1h-2zM30 0h2v1h-2zM34 0h2v1h-2zM68 0h7v1h-7zM76 0h5v1h-5zM83 0h5v1h-5zM91 0h4v1h-4zM0 1h2v1h-2zM6 1h3v1h-3zM10 1h9v1h-9zM20 1h2v1h-2zM30 1h2v1h-2zM34 1h2v1h-2zM51 1h9v1h-9zM68 1h2v1h-2zM75 1h3v1h-3zM79 1h5v1h-5zM86 1h2v1h-2zM90 1h3v1h-3zM94 1h2v1h-2zM0 2h3v1h-3zM6 2h2v1h-2zM16 2h3v1h-3zM20 2h2v1h-2zM28 2h11v1h-11zM54 2h2v1h-2zM68 2h2v1h-2zM75 2h2v1h-2zM79 2h3v1h-3zM86 2h2v1h-2zM90 2h2v1h-2zM94 2h3v1h-3zM1 3h2v1h-2zM6 3h2v1h-2zM16 3h2v1h-2zM20 3h3v1h-3zM30 3h2v1h-2zM34 3h2v1h-2zM54 3h2v1h-2zM68 3h2v1h-2zM75 3h3v1h-3zM79 3h2v1h-2zM86 3h2v1h-2zM90 3h2v1h-2zM95 3h2v1h-2zM5 4h3v1h-3zM16 4h2v1h-2zM20 4h5v1h-5zM30 4h2v1h-2zM34 4h2v1h-2zM39 4h11v1h-11zM51 4h10v1h-10zM68 4h6v1h-6zM76 4h4v1h-4zM83 4h4v1h-4zM90 4h2v1h-2zM95 4h2v1h-2zM5 5h3v1h-3zM16 5h2v1h-2zM20 5h5v1h-5zM30 5h2v1h-2zM34 5h2v1h-2zM39 5h11v1h-11zM51 5h10v1h-10zM68 5h6v1h-6zM76 5h4v1h-4zM83 5h4v1h-4zM90 5h2v1h-2zM95 5h2v1h-2zM5 6h2v1h-2zM15 6h2v1h-2zM20 6h2v1h-2zM24 6h2v1h-2zM30 6h2v1h-2zM34 6h2v1h-2zM54 6h2v1h-2zM68 6h2v1h-2zM75 6h2v1h-2zM79 6h3v1h-3zM86 6h2v1h-2zM90 6h2v1h-2zM95 6h2v1h-2zM4 7h2v1h-2zM14 7h3v1h-3zM20 7h2v1h-2zM34 7h2v1h-2zM54 7h2v1h-2zM68 7h2v1h-2zM75 7h2v1h-2zM80 7h2v1h-2zM86 7h3v1h-3zM90 7h2v1h-2zM94 7h3v1h-3zM2 8h3v1h-3zM13 8h3v1h-3zM20 8h2v1h-2zM33 8h2v1h-2zM54 8h2v1h-2zM68 8h2v1h-2zM75 8h2v1h-2zM79 8h5v1h-5zM86 8h2v1h-2zM90 8h3v1h-3zM94 8h2v1h-2zM1 9h3v1h-3zM11 9h3v1h-3zM20 9h2v1h-2zM32 9h2v1h-2zM54 9h6v1h-6zM68 9h7v1h-7zM76 9h5v1h-5zM83 9h5v1h-5zM91 9h4v1h-4z"/></svg>
<svg class="a" style="left:858px;top:747px" width="15" height="16" shape-rendering="crispEdges">
<rect x="7" y="0" width="1" height="3" fill="#000"/><rect x="8" y="1" width="5" height="1" fill="#000"/><rect x="12" y="2" width="1" height="2" fill="#000"/>
<rect x="1" y="5" width="13" height="9" fill="#000"/>
<rect x="2" y="6" width="11" height="7" fill="#fff"/>
<rect x="3" y="7" width="1" height="1" fill="#000"/><rect x="5" y="7" width="1" height="1" fill="#000"/><rect x="7" y="7" width="1" height="1" fill="#000"/><rect x="9" y="7" width="1" height="1" fill="#000"/><rect x="11" y="7" width="1" height="1" fill="#000"/>
<rect x="4" y="9" width="1" height="1" fill="#000"/><rect x="6" y="9" width="1" height="1" fill="#000"/><rect x="8" y="9" width="1" height="1" fill="#000"/><rect x="10" y="9" width="1" height="1" fill="#000"/>
<rect x="3" y="11" width="9" height="1" fill="#000"/>
</svg>
<div class="a tsunk" style="left:875px;top:742px;width:147px;height:24px;"></div>
<div class="a t" style="left:880px;top:748px;font-weight:bold;font-size:13px;line-height:13px">&#171;</div>
<svg class="a" style="left:892px;top:745px" width="92" height="18">
<path d="M2 3 l6 -2 l6 2 v6 q0 5 -6 8 q-6 -3 -6 -8 z" fill="#f8e030" stroke="#806000" stroke-width="0.8"/><rect x="7.2" y="4" width="1.6" height="6" fill="#000"/><rect x="7.2" y="11" width="1.6" height="1.6" fill="#000"/>
<path d="M20 3 l6 -2 l6 2 v6 q0 5 -6 8 q-6 -3 -6 -8 z" fill="#d03040" stroke="#701020" stroke-width="0.8"/><path d="M23.5 6 l5 5 M28.5 6 l-5 5" stroke="#fff" stroke-width="1.6"/>
<circle cx="45" cy="8" r="7" fill="#c8e0f8" stroke="#4070b0" stroke-width="0.8"/><rect x="44" y="6" width="2.5" height="7" fill="#1848a0"/><circle cx="45.2" cy="3.8" r="1.3" fill="#1848a0"/>
<rect x="55" y="1" width="16" height="16" fill="#0000d0"/><path d="M59 4 l9 5 l-9 5 z" fill="#fff"/>
<path d="M81 2 l2 4.5 l5 0.5 l-4 3 l1.5 5 l-4.5 -3 l-4.5 3 l1.5 -5 l-4 -3 l5 -0.5 z" fill="#f8e060" stroke="#907000" stroke-width="0.7"/>
</svg>
<div class="a t" style="left:987px;top:748px;font-size:12px;letter-spacing:-0.9px">22:59</div>
<svg class="a" style="left:0;top:0" width="1024" height="768"><g shape-rendering="crispEdges"><rect x="72" y="109" width="1" height="425" fill="#601414"/><rect x="65" y="109" width="7" height="1" fill="#601414"/><rect x="65" y="152" width="7" height="1" fill="#601414"/><rect x="65" y="194" width="7" height="1" fill="#601414"/><rect x="65" y="237" width="7" height="1" fill="#601414"/><rect x="65" y="279" width="7" height="1" fill="#601414"/><rect x="65" y="322" width="7" height="1" fill="#601414"/><rect x="65" y="364" width="7" height="1" fill="#601414"/><rect x="65" y="407" width="7" height="1" fill="#601414"/><rect x="65" y="449" width="7" height="1" fill="#601414"/><rect x="65" y="492" width="7" height="1" fill="#601414"/><rect x="65" y="533" width="7" height="1" fill="#601414"/><rect x="72.5" y="534.5" width="856" height="22" fill="none" stroke="#000"/><rect x="73" y="558" width="1" height="8" fill="#000"/><rect x="215" y="558" width="1" height="8" fill="#000"/><rect x="358" y="558" width="1" height="8" fill="#000"/><rect x="499" y="558" width="1" height="8" fill="#000"/><rect x="642" y="558" width="1" height="8" fill="#000"/><rect x="784" y="558" width="1" height="8" fill="#000"/><rect x="927" y="558" width="1" height="8" fill="#000"/></g><g fill="none" stroke-width="1" shape-rendering="crispEdges" stroke-linejoin="round"><polyline stroke="#007878" points="72.5,243.0 76.8,233.5 77.8,241.5 78.8,252.9 79.8,253.9 83.8,244.1 87.8,232.8 88.8,240.8 89.8,253.9 90.8,254.9 94.8,244.1 98.9,232.6 99.9,240.6 100.9,253.7 101.9,254.7 105.8,243.4 109.8,233.4 110.8,241.4 111.8,252.2 112.8,253.2 116.7,242.6 120.5,233.2 121.5,241.2 122.5,254.4 123.5,255.4 127.7,243.7 131.8,232.6 132.8,240.6 133.8,253.6 134.8,254.6 138.8,244.6 142.8,233.3 143.8,241.3 144.8,252.8 145.8,253.8 149.7,244.1 153.5,231.8 154.5,239.8 155.5,253.8 156.5,254.8 160.7,243.2 164.8,231.5 165.8,239.5 166.8,250.7 167.8,251.7 171.8,241.5 175.7,232.6 176.7,240.6 177.7,250.0 178.7,251.0 182.6,241.3 186.6,231.7 187.6,239.7 188.6,249.7 189.6,250.7 193.8,240.8 197.9,229.8 198.9,237.8 199.9,247.8 200.9,248.8 204.9,239.1 208.8,230.8 209.8,238.8 210.8,248.1 211.8,249.1 215.6,239.2 219.3,230.1 220.3,238.1 221.3,247.3 222.3,248.3 226.2,238.5 230.0,230.1 231.0,238.1 232.0,247.2 233.0,248.2 236.8,238.2 240.6,229.1 241.6,237.1 242.6,245.8 243.6,246.8 247.4,238.3 251.2,229.1 252.2,237.1 253.2,244.3 254.2,245.3 258.0,237.7 261.8,227.6 262.8,235.6 263.8,244.5 264.8,245.5 268.5,237.4 272.1,227.7 273.1,235.7 274.1,244.5 275.1,245.5 278.9,236.3 282.7,228.9 283.7,236.9 284.7,245.1 285.7,246.1 289.4,237.4 293.0,229.4 294.0,237.4 295.0,243.6 296.0,244.6 299.9,236.9 303.9,228.7 304.9,236.7 305.9,244.3 306.9,245.3 310.7,236.9 314.5,229.4 315.5,237.4 316.5,245.5 317.5,246.5 321.5,237.5 325.5,229.0 326.5,237.0 327.5,242.9 328.5,243.9 332.2,236.6 336.0,229.0 337.0,237.0 338.0,245.8 339.0,246.8 342.8,238.3 346.5,228.2 347.5,236.2 348.5,244.1 349.5,245.1 352.8,237.2 356.0,227.6 357.0,235.6 358.0,244.4 359.0,245.4 363.0,236.6 367.0,227.9 368.0,235.9 369.0,243.3 370.0,244.3 373.5,237.0 377.0,228.0 378.0,236.0 379.0,244.0 380.0,245.0 384.0,236.8 388.0,229.8 389.0,237.8 390.0,243.6 391.0,244.6 394.5,236.7 398.0,229.1 399.0,237.1 400.0,246.1 401.0,247.1 404.8,238.7 408.5,230.2 409.5,238.2 410.5,244.8 411.5,245.8 415.1,237.7 418.7,229.4 419.7,237.4 420.7,247.3 421.7,248.3 425.4,239.9 429.0,229.3 430.0,237.3 431.0,245.8 432.0,246.8 435.7,238.2 439.4,229.9 440.4,237.9 441.4,247.3 442.4,248.3 446.2,239.8 450.0,230.4 451.0,238.4 452.0,246.5 453.0,247.5 456.6,239.2 460.3,230.8 461.3,238.8 462.3,248.2 463.3,249.2 467.1,240.9 470.8,231.7 471.8,239.7 472.8,248.0 473.8,249.0 477.4,240.4 481.0,231.8 482.0,239.8 483.0,246.7 484.0,247.7 487.7,240.2 491.4,232.1 492.4,240.1 493.4,249.1 494.4,250.1 497.7,241.3 501.0,231.3 502.0,239.3 503.0,247.7 504.0,248.7 507.5,239.6 511.0,232.0 512.0,240.0 513.0,246.7 514.0,247.7 517.9,239.1 521.8,231.1 522.8,239.1 523.8,247.0 524.8,248.0 528.4,239.7 532.0,230.8 533.0,238.8 534.0,246.5 535.0,247.5 538.8,239.2 542.5,231.1 543.5,239.1 544.5,247.6 545.5,248.6 549.0,239.6 552.6,233.0 553.6,241.0 554.6,248.5 555.6,249.5 559.2,240.3 562.8,231.7 563.8,239.7 564.8,247.8 565.8,248.8 569.8,240.4 573.8,231.5 574.8,239.5 575.8,249.4 576.8,250.4 580.4,242.2 584.0,232.4 585.0,240.4 586.0,248.4 587.0,249.4 590.8,240.4 594.5,231.7 595.5,239.7 596.5,248.1 597.5,249.1 601.4,240.6 605.2,233.5 606.2,241.5 607.2,247.7 608.2,248.7 612.0,240.0 615.9,233.9 616.9,241.9 617.9,248.9 618.9,249.9 623.0,240.9 627.0,233.1 628.0,240.1 628.5,247.0"/><polyline stroke="#804000" points="72.0,379.0 78.8,363.4 79.8,367.0 81.8,367.3 83.9,369.5 85.9,371.7 88.0,372.6 90.0,373.5 92.1,374.4 93.6,378.0 99.0,362.7 100.0,366.3 102.3,367.2 104.6,368.9 106.9,369.9 109.2,372.5 111.5,373.4 113.0,377.0 119.4,360.3 120.4,364.5 122.6,366.2 124.8,368.4 127.1,369.1 129.3,370.6 131.5,372.8 133.0,377.0 139.7,359.5 140.7,363.6 142.8,365.6 144.8,367.3 146.8,368.5 148.9,369.7 150.9,371.1 153.0,371.9 154.5,376.0 160.8,359.7 161.8,363.5 164.1,365.5 166.4,366.0 168.7,368.2 171.0,369.4 173.3,371.2 174.8,375.0 181.0,359.0 182.0,362.9 184.2,363.6 186.5,365.1 188.7,367.2 191.0,368.7 193.2,370.8 194.7,374.7 201.4,359.5 202.4,363.2 204.6,365.1 206.8,367.1 208.9,367.6 211.1,370.1 213.3,370.7 214.8,374.4 223.0,359.4 224.0,362.8 226.4,365.5 228.9,367.1 231.4,367.6 233.8,369.6 235.3,373.0 242.0,360.0 243.0,363.0 245.5,363.9 247.9,365.5 250.4,366.9 252.9,369.0 254.4,372.0 261.3,357.5 262.3,361.6 264.4,362.7 266.6,365.2 268.7,367.4 270.9,368.9 273.0,369.9 274.5,374.0 281.8,357.5 282.8,361.5 284.9,363.1 287.0,365.1 289.1,367.0 291.2,367.1 293.3,369.6 294.8,373.6 302.7,357.0 303.7,361.5 306.1,364.1 308.6,366.8 311.1,368.8 313.5,370.5 315.0,375.0 321.4,357.0 322.4,361.0 324.6,363.1 326.8,364.2 329.1,365.2 331.3,368.0 333.5,369.0 335.0,373.0 341.0,358.0 342.0,361.8 344.2,362.9 346.4,365.4 348.5,367.2 350.7,367.5 352.9,369.2 354.4,373.0 360.5,358.7 361.5,362.3 363.7,363.5 366.0,366.0 368.2,367.0 370.5,367.3 372.7,369.4 374.2,373.0 381.0,358.7 382.0,362.8 384.2,363.7 386.5,365.3 388.7,368.5 391.0,369.9 393.2,370.9 394.7,375.0 400.8,359.5 401.8,363.4 404.0,364.2 406.3,367.1 408.5,369.0 410.8,369.9 413.0,371.1 414.5,375.0 421.3,360.5 422.3,364.4 424.4,365.6 426.5,367.6 428.6,368.3 430.7,369.6 432.8,372.1 434.3,376.0 441.9,362.0 442.9,365.8 445.3,368.6 447.8,369.8 450.2,371.4 452.7,373.2 454.2,377.0 460.3,361.5 461.3,365.6 463.4,367.9 465.4,368.2 467.5,370.5 469.6,371.8 471.6,371.9 473.7,373.9 475.2,378.0 480.8,362.4 481.8,365.8 483.9,366.4 485.9,367.7 488.0,368.7 490.1,370.5 492.1,371.0 494.2,372.6 495.7,376.0 500.7,362.0 501.7,365.6 504.0,366.9 506.3,367.8 508.7,370.8 511.0,371.1 513.3,372.9 514.8,376.5 521.5,361.5 522.5,365.4 524.8,366.8 527.1,368.6 529.5,370.8 531.8,371.4 534.1,373.1 535.6,377.0 541.7,361.0 542.7,365.8 545.1,368.5 547.4,369.6 549.8,371.5 552.1,373.4 554.5,375.2 556.0,380.0 562.6,361.5 563.6,365.8 565.8,366.5 568.0,369.0 570.3,370.2 572.5,371.6 574.7,374.2 576.2,378.5 582.5,362.6 583.5,367.0 585.7,369.3 588.0,369.8 590.2,372.1 592.5,374.4 594.7,375.6 596.2,380.0 602.8,362.4 603.8,366.5 605.9,368.3 608.1,369.5 610.2,371.6 612.4,373.3 614.5,374.9 616.0,379.0 621.9,362.0 628.5,372.4"/><polyline stroke="#c00000" points="72.0,419.7 74.7,419.4 77.3,417.1 80.0,417.0 83.0,414.1 86.0,411.0 89.4,408.7 92.8,407.5 95.6,409.8 98.4,413.4 101.3,415.6 104.1,418.4 106.9,421.0 109.4,419.4 112.0,417.7 114.5,414.7 117.1,412.9 119.6,410.6 122.1,408.6 124.7,406.9 127.2,404.4 129.9,407.5 132.5,410.9 135.2,414.0 137.8,418.2 140.5,420.5 143.1,418.9 145.7,417.2 148.2,415.3 150.8,411.9 153.4,410.5 156.0,408.3 159.5,409.0 163.0,408.0 165.7,411.0 168.3,411.9 171.0,415.0 174.1,413.8 177.2,414.1 180.3,412.9 183.4,413.4 186.6,410.2 189.7,408.0 192.4,406.9 195.1,407.8 197.9,407.8 200.6,407.0 203.2,411.0 205.7,412.7 208.2,417.0 210.8,419.7 213.4,419.0 216.4,415.5 219.3,410.6 222.3,407.5 225.0,406.5 227.8,404.8 230.5,401.5 233.2,400.3 236.1,405.5 239.1,408.7 242.0,413.2 244.9,417.5 247.9,417.2 251.0,415.0 254.0,412.1 256.9,407.2 259.9,404.3 262.4,405.2 264.9,406.5 267.4,407.5 270.1,409.3 272.9,411.1 275.6,413.5 278.4,416.0 281.1,416.7 283.8,416.5 288.0,413.0 291.4,409.3 294.8,407.5 297.5,406.6 300.3,405.4 303.0,404.5 305.7,404.3 308.4,406.0 311.6,408.8 314.8,412.6 318.0,415.5 320.7,415.5 323.5,412.4 326.2,408.3 329.0,406.0 331.7,407.2 334.4,406.5 339.2,401.3 342.0,402.0 344.5,408.1 347.1,413.9 349.6,418.5 352.3,415.8 355.1,414.3 357.8,412.0 360.5,411.0 363.2,409.1 366.0,405.7 368.7,403.7 371.8,405.0 374.9,407.7 377.9,405.9 381.0,404.5 384.4,404.6 387.9,403.0 391.3,400.9 394.7,397.5 397.6,401.3 400.4,405.3 403.3,411.1 406.1,414.7 409.0,418.8 411.6,416.9 414.2,413.3 416.8,411.0 419.4,409.9 422.0,407.2 424.7,407.5 427.5,407.2 430.2,408.5 433.6,411.9 437.0,413.5 439.7,414.3 442.5,415.1 445.2,414.2 448.0,416.2 450.7,416.0 453.5,412.2 456.2,410.9 459.0,407.3 461.5,406.3 464.0,405.1 466.5,404.5 469.0,406.4 471.5,409.0 474.0,410.0 477.0,414.0 480.0,419.0 482.9,416.3 485.8,415.1 488.7,412.5 491.6,411.0 494.9,408.1 498.2,406.0 501.5,404.5 504.0,406.9 506.5,410.5 509.0,414.0 511.5,417.3 514.0,421.0 516.5,419.4 519.0,416.2 521.5,414.5 524.0,411.7 526.5,409.9 529.0,408.0 532.0,407.9 535.0,409.2 538.0,410.5 540.5,412.0 543.0,416.0 545.5,418.1 548.0,420.5 550.7,417.8 553.3,416.4 556.0,415.2 558.6,411.6 561.3,410.3 563.8,410.9 566.3,410.2 568.8,410.3 571.3,410.3 574.6,411.1 578.0,410.5 581.3,413.6 584.6,417.2 587.9,420.5 591.2,417.9 594.5,415.5 597.8,411.6 600.9,408.4 603.9,406.5 607.0,403.0 609.9,408.3 612.8,413.0 615.7,417.4 618.6,422.5 621.9,420.1 625.2,417.5 628.5,416.3"/><polyline stroke="#e08a24" points="72.0,493.0 74.0,494.7 76.0,497.0 77.5,496.5 79.0,496.3 80.6,495.1 82.1,493.9 83.6,492.6 85.1,492.0 86.7,491.1 88.2,490.3 89.7,490.0 91.2,490.1 92.8,490.8 94.3,492.0 95.8,493.5 97.4,494.6 98.9,495.9 100.5,496.6 102.0,497.0 103.6,497.0 105.1,496.1 106.7,494.4 108.2,492.6 109.8,491.4 111.4,489.6 112.9,488.7 114.5,488.5 116.1,488.5 117.7,489.9 119.3,491.6 120.8,493.4 122.4,494.8 124.0,496.1 125.6,496.5 127.1,495.9 128.7,495.2 130.2,493.9 131.8,492.7 133.3,491.0 134.9,489.8 136.4,489.1 138.0,489.0 139.6,489.1 141.1,490.3 142.7,491.5 144.3,493.1 145.9,494.4 147.4,495.3 149.0,495.5 150.5,495.5 152.0,494.6 153.6,493.6 155.1,492.9 156.6,491.0 158.1,490.3 159.7,489.2 161.2,488.2 162.7,488.3 164.3,489.1 166.0,490.5 167.6,492.2 169.3,494.2 170.9,495.7 172.6,496.0 174.2,495.4 175.8,494.5 177.4,492.9 179.0,491.3 180.6,489.7 182.2,488.6 183.8,488.0 185.4,488.3 187.0,489.1 188.6,489.8 190.2,491.0 191.8,492.0 193.4,493.1 195.0,494.3 196.6,495.4 198.2,495.8 199.8,496.3 201.4,496.2 203.0,495.2 204.6,494.1 206.2,492.8 207.8,491.7 209.4,490.8 211.0,490.5 212.7,490.6 214.4,492.3 216.2,493.6 217.9,494.6 219.6,495.0 221.1,494.7 222.6,494.0 224.1,492.3 225.6,491.2 227.2,489.3 228.7,487.6 230.2,486.4 231.7,485.9 233.2,485.5 234.8,485.7 236.4,487.4 238.0,489.3 239.5,491.0 241.1,492.7 242.7,494.0 244.3,494.5 245.9,494.4 247.4,493.6 248.9,492.4 250.5,491.0 252.1,489.2 253.6,488.1 255.1,487.4 256.7,487.3 258.3,487.8 259.9,488.5 261.5,490.1 263.0,491.2 264.6,492.7 266.2,493.8 267.8,494.3 269.4,494.2 270.9,493.6 272.4,492.6 274.0,491.2 275.6,490.2 277.1,489.2 278.6,488.5 280.2,488.3 281.9,488.5 283.5,490.4 285.1,491.7 286.8,494.0 288.5,495.3 290.1,495.5 291.7,494.9 293.4,494.4 295.0,493.4 296.7,492.0 298.3,490.1 300.0,488.4 301.6,487.2 303.3,486.9 304.9,486.3 306.5,486.5 308.1,487.9 309.7,489.2 311.2,491.2 312.8,493.1 314.4,493.6 316.0,494.3 317.6,494.3 319.1,493.3 320.6,492.5 322.2,491.0 323.8,489.4 325.3,488.8 326.8,487.7 328.4,487.5 330.1,487.5 331.8,488.4 333.5,490.0 335.1,491.4 336.8,492.6 338.5,493.4 340.2,494.0 341.7,493.6 343.2,492.6 344.7,491.7 346.2,489.7 347.7,488.9 349.2,488.1 350.7,487.5 352.2,487.5 353.8,488.9 355.3,490.0 356.9,491.5 358.4,492.5 359.9,493.8 361.5,494.6 363.0,495.0 364.6,495.1 366.1,494.0 367.6,492.6 369.2,491.2 370.8,489.7 372.3,488.3 373.8,487.5 375.4,487.5 377.0,488.1 378.6,488.7 380.2,490.5 381.7,491.6 383.3,493.0 384.9,494.2 386.5,494.5 388.1,494.1 389.6,493.6 391.1,493.1 392.7,492.0 394.2,490.9 395.8,489.9 397.3,489.5 398.9,489.0 400.6,489.7 402.3,490.4 404.0,492.1 405.6,493.3 407.3,495.3 409.0,496.1 410.7,496.5 412.4,496.1 414.2,494.6 415.9,492.3 417.6,490.0 419.4,489.1 421.1,488.3 422.7,488.4 424.4,489.5 426.0,490.7 427.6,492.3 429.2,494.1 430.9,495.6 432.5,496.0 434.1,496.5 435.7,496.4 437.4,495.4 439.0,494.4 440.6,493.0 442.2,491.6 443.9,490.5 445.5,489.8 447.1,489.7 448.6,490.3 450.1,491.0 451.6,492.1 453.1,494.1 454.6,495.5 456.1,496.0 457.6,496.4 459.3,495.8 461.0,495.0 462.7,493.7 464.3,492.6 466.0,491.2 467.7,490.4 469.4,490.3 470.9,490.6 472.4,492.0 473.9,494.0 475.4,495.8 476.9,497.3 478.4,498.5 479.9,499.0 481.4,498.7 483.0,497.7 484.6,496.3 486.1,494.4 487.6,493.0 489.2,492.1 490.8,490.6 492.3,490.5 494.0,490.9 495.6,492.1 497.3,493.8 499.0,495.1 500.7,496.7 502.3,497.7 504.0,498.3 505.5,498.0 507.0,497.4 508.5,496.8 510.0,495.6 511.6,494.4 513.1,492.6 514.6,491.7 516.1,491.6 517.6,491.2 519.2,491.8 520.8,492.3 522.4,493.6 524.0,494.6 525.6,496.1 527.2,497.3 528.8,497.3 530.3,497.3 531.8,496.6 533.4,495.7 534.9,494.0 536.4,492.7 538.0,491.7 539.5,491.3 541.0,491.0 542.7,491.5 544.4,492.9 546.1,494.4 547.7,496.2 549.4,497.9 551.1,498.9 552.8,499.3 554.4,499.0 556.0,497.8 557.7,497.0 559.3,495.1 560.9,494.0 562.5,492.5 564.2,491.4 565.8,491.2 567.4,491.4 569.1,492.8 570.8,494.8 572.4,496.6 574.1,497.5 575.7,498.2 577.2,497.8 578.7,497.6 580.2,497.0 581.7,496.1 583.3,495.1 584.8,494.6 586.3,493.5 587.8,493.3 589.3,493.3 590.9,493.7 592.6,495.2 594.2,496.6 595.9,498.3 597.6,499.2 599.2,499.6 600.8,499.2 602.5,498.6 604.1,498.1 605.8,496.8 607.4,495.3 609.1,493.9 610.7,493.3 612.4,492.8 614.0,492.5 615.7,493.2 617.5,494.9 619.2,497.5 621.0,499.6 622.7,500.0 624.6,499.1 626.4,497.6 628.3,497.2"/><polyline stroke="#00007a" points="72.5,517.0 73.0,517.0 74.4,509.0 75.8,501.3 77.2,493.7 78.6,486.4 80.0,479.4 81.3,472.7 82.7,466.3 84.1,460.3 85.5,454.7 86.9,449.7 88.3,445.3 89.7,442.4 90.7,456.4 91.7,505.5 92.7,512.5 94.3,515.3 96.0,513.9 97.2,516.2 98.4,514.1 99.7,516.9 100.9,517.5 102.2,509.3 103.6,501.4 104.9,493.6 106.3,486.2 107.6,479.0 109.0,472.1 110.3,465.5 111.6,459.3 113.0,453.6 114.3,448.4 115.7,444.0 117.0,441.0 118.0,455.0 119.0,504.0 120.0,511.0 121.5,514.3 123.0,512.5 124.1,514.1 125.2,513.6 126.4,514.8 127.5,516.0 128.9,508.0 130.2,500.3 131.6,492.8 133.0,485.5 134.3,478.5 135.7,471.8 137.1,465.4 138.4,459.4 139.8,453.8 141.2,448.8 142.5,444.4 143.9,441.5 144.9,455.5 145.9,503.0 146.9,510.0 148.3,513.4 149.7,511.2 150.8,513.2 151.9,512.3 152.9,513.8 154.0,515.0 155.4,507.0 156.8,499.2 158.2,491.6 159.6,484.3 161.0,477.2 162.4,470.5 163.8,464.0 165.2,458.0 166.6,452.4 168.0,447.3 169.4,443.0 170.8,440.0 171.8,454.0 172.8,502.0 173.8,509.0 175.3,512.5 176.8,510.5 177.9,512.1 179.1,510.7 180.2,512.9 181.3,514.0 182.6,505.9 184.0,498.1 185.3,490.5 186.6,483.2 188.0,476.1 189.3,469.3 190.6,462.8 192.0,456.8 193.3,451.1 194.6,446.0 196.0,441.7 197.3,438.7 198.3,452.7 199.3,500.9 200.3,507.9 201.7,511.1 203.1,509.9 204.1,511.0 205.1,509.8 206.2,511.6 207.2,512.9 208.6,504.6 210.0,496.6 211.4,488.8 212.8,481.2 214.2,474.0 215.6,467.0 216.9,460.4 218.3,454.1 219.7,448.3 221.1,443.1 222.5,438.7 223.9,435.6 224.9,449.6 225.9,496.0 226.9,503.0 228.3,506.6 229.7,504.1 230.7,506.0 231.7,504.5 232.8,506.9 233.8,508.0 235.2,500.3 236.6,492.7 238.0,485.4 239.4,478.3 240.8,471.5 242.2,465.0 243.5,458.8 244.9,453.0 246.3,447.5 247.7,442.6 249.1,438.5 250.5,435.6 251.5,449.6 252.5,497.2 253.5,504.2 254.9,507.7 256.3,506.2 257.3,508.0 258.3,506.8 259.4,508.7 260.4,509.2 261.8,501.3 263.2,493.7 264.6,486.2 266.0,479.0 267.4,472.1 268.8,465.5 270.1,459.2 271.5,453.2 272.9,447.7 274.3,442.8 275.7,438.5 277.1,435.6 278.1,449.6 279.1,497.8 280.1,504.8 281.6,507.6 283.1,505.9 284.2,508.8 285.4,507.1 286.5,508.2 287.6,509.8 289.0,501.8 290.4,494.0 291.8,486.5 293.2,479.2 294.6,472.1 296.0,465.4 297.3,459.0 298.7,452.9 300.1,447.3 301.5,442.3 302.9,438.0 304.3,435.0 305.3,449.0 306.3,497.2 307.3,504.2 308.8,507.4 310.3,505.6 311.4,507.5 312.6,506.0 313.7,507.8 314.8,509.2 316.2,501.3 317.5,493.7 318.9,486.3 320.2,479.1 321.6,472.2 323.0,465.6 324.3,459.3 325.7,453.3 327.0,447.8 328.4,442.9 329.7,438.6 331.1,435.7 332.1,449.7 333.1,497.0 334.1,504.0 335.6,506.4 337.2,505.2 338.3,507.3 339.5,506.5 340.6,507.5 341.8,509.0 343.2,501.2 344.5,493.7 345.9,486.3 347.2,479.3 348.6,472.4 350.0,465.9 351.3,459.7 352.7,453.8 354.0,448.4 355.4,443.5 356.7,439.3 358.1,436.4 359.1,450.4 360.1,498.5 361.1,505.5 362.6,509.1 364.1,506.6 365.2,508.8 366.4,507.9 367.5,509.9 368.6,510.5 369.9,502.6 371.3,495.0 372.6,487.6 374.0,480.4 375.3,473.5 376.6,466.9 378.0,460.6 379.3,454.6 380.7,449.1 382.0,444.2 383.4,439.9 384.7,437.0 385.7,451.0 386.7,498.5 387.7,505.5 389.1,508.4 390.5,506.5 391.5,509.0 392.5,507.3 393.6,510.0 394.6,510.5 396.0,502.7 397.4,495.2 398.8,487.8 400.2,480.7 401.6,473.9 403.0,467.3 404.3,461.1 405.7,455.2 407.1,449.8 408.5,444.9 409.9,440.7 411.3,437.8 412.3,451.8 413.3,499.0 414.3,506.0 415.8,508.6 417.3,507.3 418.4,510.0 419.6,507.4 420.7,509.9 421.8,511.0 423.1,503.2 424.5,495.7 425.8,488.4 427.1,481.3 428.5,474.5 429.8,467.9 431.1,461.7 432.5,455.9 433.8,450.5 435.1,445.6 436.5,441.4 437.8,438.5 438.8,452.5 439.8,500.5 440.8,507.5 442.3,510.9 443.8,509.3 445.0,510.4 446.1,508.9 447.3,511.0 448.4,512.5 449.8,504.5 451.1,496.7 452.5,489.1 453.9,481.8 455.2,474.7 456.6,468.0 458.0,461.5 459.3,455.5 460.7,449.9 462.1,444.8 463.4,440.5 464.8,437.5 465.8,451.5 466.8,502.6 467.8,509.6 469.6,513.1 471.4,510.8 472.8,513.4 474.1,512.1 475.4,513.4 476.8,514.6 478.1,506.7 479.3,499.0 480.6,491.6 481.9,484.4 483.1,477.4 484.4,470.8 485.7,464.4 486.9,458.5 488.2,453.0 489.5,448.0 490.7,443.7 492.0,440.8 493.0,454.8 494.0,503.3 495.0,510.3 496.4,513.0 497.9,512.3 499.0,513.9 500.0,512.0 501.1,514.6 502.2,515.3 503.6,507.4 504.9,499.6 506.3,492.1 507.7,484.9 509.0,477.9 510.4,471.2 511.8,464.8 513.1,458.8 514.5,453.3 515.9,448.2 517.2,443.9 518.6,441.0 519.6,455.0 520.6,502.5 521.6,509.5 523.2,512.3 524.7,510.7 525.9,512.4 527.1,511.8 528.2,514.0 529.4,514.5 530.7,506.7 532.0,499.2 533.2,491.8 534.5,484.7 535.8,477.9 537.0,471.3 538.3,465.1 539.6,459.2 540.9,453.8 542.2,448.9 543.4,444.7 544.7,441.8 545.7,455.8 546.7,504.6 547.7,511.6 549.3,514.8 551.0,513.6 552.2,514.5 553.4,513.3 554.7,515.6 555.9,516.6 557.2,508.7 558.6,501.1 559.9,493.6 561.3,486.4 562.6,479.5 564.0,472.9 565.3,466.6 566.6,460.6 568.0,455.1 569.3,450.2 570.7,445.9 572.0,443.0 573.0,457.0 574.0,504.0 575.0,511.0 576.5,514.5 578.0,513.0 579.1,514.4 580.2,512.7 581.4,514.9 582.5,516.0 583.8,508.1 585.2,500.5 586.5,493.0 587.9,485.8 589.2,478.9 590.5,472.3 591.9,466.0 593.2,460.0 594.6,454.5 595.9,449.6 597.3,445.3 598.6,442.4 599.6,456.4 600.6,504.4 601.6,511.4 603.1,514.4 604.6,513.4 605.7,514.5 606.8,513.8 607.9,515.7 609.0,516.4 610.4,508.5 611.7,500.9 613.0,493.5 614.4,486.3 615.8,479.4 617.1,472.8 618.5,466.5 619.8,460.6 621.2,455.1 622.5,450.1 623.9,445.9 625.2,443.0 626.2,457.0 627.7,495.0 628.6,511.6"/></g></svg>
<svg class="jt" style="left:36px;top:104px" width="38" height="13"><path fill="#601414" d="M3 1h1v1h-1zM10 1h2v1h-2zM24 1h2v1h-2zM2 2h2v1h-2zM9 2h1v1h-1zM12 2h1v1h-1zM23 2h1v1h-1zM26 2h1v1h-1zM3 3h1v1h-1zM9 3h1v1h-1zM12 3h1v1h-1zM23 3h1v1h-1zM26 3h1v1h-1zM3 4h1v1h-1zM9 4h1v1h-1zM12 4h1v1h-1zM23 4h1v1h-1zM26 4h1v1h-1zM3 5h1v1h-1zM9 5h1v1h-1zM12 5h1v1h-1zM23 5h1v1h-1zM26 5h1v1h-1zM3 6h1v1h-1zM9 6h1v1h-1zM12 6h1v1h-1zM23 6h1v1h-1zM26 6h1v1h-1zM3 7h1v1h-1zM9 7h1v1h-1zM12 7h1v1h-1zM23 7h1v1h-1zM26 7h1v1h-1zM3 8h1v1h-1zM9 8h1v1h-1zM12 8h1v1h-1zM17 8h2v1h-2zM23 8h1v1h-1zM26 8h1v1h-1zM2 9h3v1h-3zM10 9h2v1h-2zM17 9h2v1h-2zM24 9h2v1h-2z"/></svg>
<svg class="jt" style="left:43px;top:147px" width="31" height="13"><path fill="#601414" d="M3 1h2v1h-2zM17 1h2v1h-2zM2 2h1v1h-1zM5 2h1v1h-1zM16 2h1v1h-1zM19 2h1v1h-1zM2 3h1v1h-1zM5 3h1v1h-1zM16 3h1v1h-1zM19 3h1v1h-1zM2 4h1v1h-1zM5 4h1v1h-1zM16 4h1v1h-1zM19 4h1v1h-1zM2 5h1v1h-1zM5 5h1v1h-1zM16 5h1v1h-1zM19 5h1v1h-1zM2 6h1v1h-1zM5 6h1v1h-1zM16 6h1v1h-1zM19 6h1v1h-1zM2 7h1v1h-1zM5 7h1v1h-1zM16 7h1v1h-1zM19 7h1v1h-1zM2 8h1v1h-1zM5 8h1v1h-1zM10 8h2v1h-2zM16 8h1v1h-1zM19 8h1v1h-1zM3 9h2v1h-2zM10 9h2v1h-2zM17 9h2v1h-2z"/></svg>
<svg class="jt" style="left:29px;top:189px" width="45" height="13"><path fill="#601414" d="M10 1h1v1h-1zM17 1h2v1h-2zM31 1h2v1h-2zM9 2h2v1h-2zM16 2h1v1h-1zM19 2h1v1h-1zM30 2h1v1h-1zM33 2h1v1h-1zM10 3h1v1h-1zM16 3h1v1h-1zM19 3h1v1h-1zM30 3h1v1h-1zM33 3h1v1h-1zM10 4h1v1h-1zM16 4h1v1h-1zM19 4h1v1h-1zM30 4h1v1h-1zM33 4h1v1h-1zM2 5h4v1h-4zM10 5h1v1h-1zM16 5h1v1h-1zM19 5h1v1h-1zM30 5h1v1h-1zM33 5h1v1h-1zM10 6h1v1h-1zM16 6h1v1h-1zM19 6h1v1h-1zM30 6h1v1h-1zM33 6h1v1h-1zM10 7h1v1h-1zM16 7h1v1h-1zM19 7h1v1h-1zM30 7h1v1h-1zM33 7h1v1h-1zM10 8h1v1h-1zM16 8h1v1h-1zM19 8h1v1h-1zM24 8h2v1h-2zM30 8h1v1h-1zM33 8h1v1h-1zM9 9h3v1h-3zM17 9h2v1h-2zM24 9h2v1h-2zM31 9h2v1h-2z"/></svg>
<svg class="jt" style="left:29px;top:232px" width="45" height="13"><path fill="#601414" d="M10 1h2v1h-2zM17 1h2v1h-2zM31 1h2v1h-2zM9 2h1v1h-1zM12 2h1v1h-1zM16 2h1v1h-1zM19 2h1v1h-1zM30 2h1v1h-1zM33 2h1v1h-1zM9 3h2v1h-2zM12 3h1v1h-1zM16 3h1v1h-1zM19 3h1v1h-1zM30 3h1v1h-1zM33 3h1v1h-1zM12 4h1v1h-1zM16 4h1v1h-1zM19 4h1v1h-1zM30 4h1v1h-1zM33 4h1v1h-1zM2 5h4v1h-4zM11 5h1v1h-1zM16 5h1v1h-1zM19 5h1v1h-1zM30 5h1v1h-1zM33 5h1v1h-1zM10 6h1v1h-1zM16 6h1v1h-1zM19 6h1v1h-1zM30 6h1v1h-1zM33 6h1v1h-1zM10 7h1v1h-1zM16 7h1v1h-1zM19 7h1v1h-1zM30 7h1v1h-1zM33 7h1v1h-1zM9 8h1v1h-1zM12 8h1v1h-1zM16 8h1v1h-1zM19 8h1v1h-1zM24 8h2v1h-2zM30 8h1v1h-1zM33 8h1v1h-1zM9 9h4v1h-4zM17 9h2v1h-2zM24 9h2v1h-2zM31 9h2v1h-2z"/></svg>
<svg class="jt" style="left:29px;top:274px" width="45" height="13"><path fill="#601414" d="M10 1h2v1h-2zM17 1h2v1h-2zM31 1h2v1h-2zM9 2h1v1h-1zM12 2h1v1h-1zM16 2h1v1h-1zM19 2h1v1h-1zM30 2h1v1h-1zM33 2h1v1h-1zM9 3h2v1h-2zM12 3h1v1h-1zM16 3h1v1h-1zM19 3h1v1h-1zM30 3h1v1h-1zM33 3h1v1h-1zM12 4h1v1h-1zM16 4h1v1h-1zM19 4h1v1h-1zM30 4h1v1h-1zM33 4h1v1h-1zM2 5h4v1h-4zM10 5h2v1h-2zM16 5h1v1h-1zM19 5h1v1h-1zM30 5h1v1h-1zM33 5h1v1h-1zM12 6h1v1h-1zM16 6h1v1h-1zM19 6h1v1h-1zM30 6h1v1h-1zM33 6h1v1h-1zM9 7h2v1h-2zM12 7h1v1h-1zM16 7h1v1h-1zM19 7h1v1h-1zM30 7h1v1h-1zM33 7h1v1h-1zM9 8h1v1h-1zM12 8h1v1h-1zM16 8h1v1h-1zM19 8h1v1h-1zM24 8h2v1h-2zM30 8h1v1h-1zM33 8h1v1h-1zM10 9h2v1h-2zM17 9h2v1h-2zM24 9h2v1h-2zM31 9h2v1h-2z"/></svg>
<svg class="jt" style="left:29px;top:317px" width="45" height="13"><path fill="#601414" d="M11 1h1v1h-1zM17 1h2v1h-2zM31 1h2v1h-2zM10 2h2v1h-2zM16 2h1v1h-1zM19 2h1v1h-1zM30 2h1v1h-1zM33 2h1v1h-1zM10 3h2v1h-2zM16 3h1v1h-1zM19 3h1v1h-1zM30 3h1v1h-1zM33 3h1v1h-1zM9 4h1v1h-1zM11 4h1v1h-1zM16 4h1v1h-1zM19 4h1v1h-1zM30 4h1v1h-1zM33 4h1v1h-1zM2 5h4v1h-4zM9 5h1v1h-1zM11 5h1v1h-1zM16 5h1v1h-1zM19 5h1v1h-1zM30 5h1v1h-1zM33 5h1v1h-1zM8 6h1v1h-1zM11 6h1v1h-1zM16 6h1v1h-1zM19 6h1v1h-1zM30 6h1v1h-1zM33 6h1v1h-1zM8 7h5v1h-5zM16 7h1v1h-1zM19 7h1v1h-1zM30 7h1v1h-1zM33 7h1v1h-1zM11 8h1v1h-1zM16 8h1v1h-1zM19 8h1v1h-1zM24 8h2v1h-2zM30 8h1v1h-1zM33 8h1v1h-1zM10 9h3v1h-3zM17 9h2v1h-2zM24 9h2v1h-2zM31 9h2v1h-2z"/></svg>
<svg class="jt" style="left:29px;top:359px" width="45" height="13"><path fill="#601414" d="M9 1h4v1h-4zM17 1h2v1h-2zM31 1h2v1h-2zM9 2h1v1h-1zM16 2h1v1h-1zM19 2h1v1h-1zM30 2h1v1h-1zM33 2h1v1h-1zM9 3h1v1h-1zM16 3h1v1h-1zM19 3h1v1h-1zM30 3h1v1h-1zM33 3h1v1h-1zM9 4h3v1h-3zM16 4h1v1h-1zM19 4h1v1h-1zM30 4h1v1h-1zM33 4h1v1h-1zM2 5h4v1h-4zM9 5h1v1h-1zM12 5h1v1h-1zM16 5h1v1h-1zM19 5h1v1h-1zM30 5h1v1h-1zM33 5h1v1h-1zM12 6h1v1h-1zM16 6h1v1h-1zM19 6h1v1h-1zM30 6h1v1h-1zM33 6h1v1h-1zM9 7h2v1h-2zM12 7h1v1h-1zM16 7h1v1h-1zM19 7h1v1h-1zM30 7h1v1h-1zM33 7h1v1h-1zM9 8h1v1h-1zM12 8h1v1h-1zM16 8h1v1h-1zM19 8h1v1h-1zM24 8h2v1h-2zM30 8h1v1h-1zM33 8h1v1h-1zM10 9h2v1h-2zM17 9h2v1h-2zM24 9h2v1h-2zM31 9h2v1h-2z"/></svg>
<svg class="jt" style="left:29px;top:402px" width="45" height="13"><path fill="#601414" d="M10 1h2v1h-2zM17 1h2v1h-2zM31 1h2v1h-2zM9 2h1v1h-1zM12 2h1v1h-1zM16 2h1v1h-1zM19 2h1v1h-1zM30 2h1v1h-1zM33 2h1v1h-1zM9 3h1v1h-1zM11 3h2v1h-2zM16 3h1v1h-1zM19 3h1v1h-1zM30 3h1v1h-1zM33 3h1v1h-1zM9 4h1v1h-1zM16 4h1v1h-1zM19 4h1v1h-1zM30 4h1v1h-1zM33 4h1v1h-1zM2 5h4v1h-4zM9 5h3v1h-3zM16 5h1v1h-1zM19 5h1v1h-1zM30 5h1v1h-1zM33 5h1v1h-1zM9 6h1v1h-1zM12 6h1v1h-1zM16 6h1v1h-1zM19 6h1v1h-1zM30 6h1v1h-1zM33 6h1v1h-1zM9 7h1v1h-1zM12 7h1v1h-1zM16 7h1v1h-1zM19 7h1v1h-1zM30 7h1v1h-1zM33 7h1v1h-1zM9 8h1v1h-1zM12 8h1v1h-1zM16 8h1v1h-1zM19 8h1v1h-1zM24 8h2v1h-2zM30 8h1v1h-1zM33 8h1v1h-1zM10 9h2v1h-2zM17 9h2v1h-2zM24 9h2v1h-2zM31 9h2v1h-2z"/></svg>
<svg class="jt" style="left:29px;top:444px" width="45" height="13"><path fill="#601414" d="M9 1h4v1h-4zM17 1h2v1h-2zM31 1h2v1h-2zM9 2h1v1h-1zM12 2h1v1h-1zM16 2h1v1h-1zM19 2h1v1h-1zM30 2h1v1h-1zM33 2h1v1h-1zM12 3h1v1h-1zM16 3h1v1h-1zM19 3h1v1h-1zM30 3h1v1h-1zM33 3h1v1h-1zM11 4h1v1h-1zM16 4h1v1h-1zM19 4h1v1h-1zM30 4h1v1h-1zM33 4h1v1h-1zM2 5h4v1h-4zM11 5h1v1h-1zM16 5h1v1h-1zM19 5h1v1h-1zM30 5h1v1h-1zM33 5h1v1h-1zM11 6h1v1h-1zM16 6h1v1h-1zM19 6h1v1h-1zM30 6h1v1h-1zM33 6h1v1h-1zM10 7h1v1h-1zM16 7h1v1h-1zM19 7h1v1h-1zM30 7h1v1h-1zM33 7h1v1h-1zM10 8h1v1h-1zM16 8h1v1h-1zM19 8h1v1h-1zM24 8h2v1h-2zM30 8h1v1h-1zM33 8h1v1h-1zM10 9h1v1h-1zM17 9h2v1h-2zM24 9h2v1h-2zM31 9h2v1h-2z"/></svg>
<svg class="jt" style="left:29px;top:487px" width="45" height="13"><path fill="#601414" d="M10 1h2v1h-2zM17 1h2v1h-2zM31 1h2v1h-2zM9 2h1v1h-1zM12 2h1v1h-1zM16 2h1v1h-1zM19 2h1v1h-1zM30 2h1v1h-1zM33 2h1v1h-1zM9 3h1v1h-1zM12 3h1v1h-1zM16 3h1v1h-1zM19 3h1v1h-1zM30 3h1v1h-1zM33 3h1v1h-1zM9 4h1v1h-1zM12 4h1v1h-1zM16 4h1v1h-1zM19 4h1v1h-1zM30 4h1v1h-1zM33 4h1v1h-1zM2 5h4v1h-4zM10 5h2v1h-2zM16 5h1v1h-1zM19 5h1v1h-1zM30 5h1v1h-1zM33 5h1v1h-1zM9 6h1v1h-1zM12 6h1v1h-1zM16 6h1v1h-1zM19 6h1v1h-1zM30 6h1v1h-1zM33 6h1v1h-1zM9 7h1v1h-1zM12 7h1v1h-1zM16 7h1v1h-1zM19 7h1v1h-1zM30 7h1v1h-1zM33 7h1v1h-1zM9 8h1v1h-1zM12 8h1v1h-1zM16 8h1v1h-1zM19 8h1v1h-1zM24 8h2v1h-2zM30 8h1v1h-1zM33 8h1v1h-1zM10 9h2v1h-2zM17 9h2v1h-2zM24 9h2v1h-2zM31 9h2v1h-2z"/></svg>
<svg class="jt" style="left:29px;top:528px" width="45" height="13"><path fill="#601414" d="M10 1h2v1h-2zM17 1h2v1h-2zM31 1h2v1h-2zM9 2h1v1h-1zM12 2h1v1h-1zM16 2h1v1h-1zM19 2h1v1h-1zM30 2h1v1h-1zM33 2h1v1h-1zM9 3h1v1h-1zM12 3h1v1h-1zM16 3h1v1h-1zM19 3h1v1h-1zM30 3h1v1h-1zM33 3h1v1h-1zM9 4h1v1h-1zM12 4h1v1h-1zM16 4h1v1h-1zM19 4h1v1h-1zM30 4h1v1h-1zM33 4h1v1h-1zM2 5h4v1h-4zM10 5h3v1h-3zM16 5h1v1h-1zM19 5h1v1h-1zM30 5h1v1h-1zM33 5h1v1h-1zM12 6h1v1h-1zM16 6h1v1h-1zM19 6h1v1h-1zM30 6h1v1h-1zM33 6h1v1h-1zM9 7h2v1h-2zM12 7h1v1h-1zM16 7h1v1h-1zM19 7h1v1h-1zM30 7h1v1h-1zM33 7h1v1h-1zM9 8h1v1h-1zM12 8h1v1h-1zM16 8h1v1h-1zM19 8h1v1h-1zM24 8h2v1h-2zM30 8h1v1h-1zM33 8h1v1h-1zM10 9h2v1h-2zM17 9h2v1h-2zM24 9h2v1h-2zM31 9h2v1h-2z"/></svg>
<svg class="jt" style="left:56px;top:92px" width="24" height="13"><path fill="#601414" d="M1 1h1v1h-1zM5 1h1v1h-1zM10 1h1v1h-1zM1 2h1v1h-1zM5 2h1v1h-1zM9 2h2v1h-2zM2 3h1v1h-1zM4 3h1v1h-1zM10 3h1v1h-1zM2 4h1v1h-1zM4 4h1v1h-1zM10 4h1v1h-1zM3 5h1v1h-1zM10 5h1v1h-1zM3 6h1v1h-1zM10 6h1v1h-1zM3 7h1v1h-1zM10 7h1v1h-1zM3 8h1v1h-1zM10 8h1v1h-1zM2 9h3v1h-3zM9 9h3v1h-3z"/></svg>
<svg class="jt" style="left:76px;top:558px" width="80" height="13"><path fill="#000" d="M34 0h1v1h-1zM55 0h1v1h-1zM3 1h2v1h-2zM10 1h2v1h-2zM17 1h2v1h-2zM24 1h2v1h-2zM33 1h1v1h-1zM38 1h2v1h-2zM45 1h1v1h-1zM54 1h1v1h-1zM59 1h1v1h-1zM66 1h2v1h-2zM2 2h1v1h-1zM5 2h1v1h-1zM9 2h1v1h-1zM12 2h1v1h-1zM16 2h1v1h-1zM19 2h1v1h-1zM23 2h1v1h-1zM26 2h1v1h-1zM33 2h1v1h-1zM37 2h1v1h-1zM40 2h1v1h-1zM44 2h2v1h-2zM54 2h1v1h-1zM58 2h2v1h-2zM65 2h1v1h-1zM68 2h1v1h-1zM2 3h2v1h-2zM5 3h1v1h-1zM9 3h1v1h-1zM12 3h1v1h-1zM16 3h2v1h-2zM19 3h1v1h-1zM23 3h1v1h-1zM25 3h2v1h-2zM32 3h1v1h-1zM37 3h1v1h-1zM40 3h1v1h-1zM45 3h1v1h-1zM53 3h1v1h-1zM59 3h1v1h-1zM65 3h2v1h-2zM68 3h1v1h-1zM5 4h1v1h-1zM9 4h1v1h-1zM12 4h1v1h-1zM19 4h1v1h-1zM23 4h1v1h-1zM32 4h1v1h-1zM37 4h1v1h-1zM40 4h1v1h-1zM45 4h1v1h-1zM53 4h1v1h-1zM59 4h1v1h-1zM68 4h1v1h-1zM4 5h1v1h-1zM9 5h1v1h-1zM12 5h1v1h-1zM18 5h1v1h-1zM23 5h3v1h-3zM31 5h1v1h-1zM37 5h1v1h-1zM40 5h1v1h-1zM45 5h1v1h-1zM52 5h1v1h-1zM59 5h1v1h-1zM66 5h2v1h-2zM3 6h1v1h-1zM9 6h1v1h-1zM12 6h1v1h-1zM17 6h1v1h-1zM23 6h1v1h-1zM26 6h1v1h-1zM31 6h1v1h-1zM37 6h1v1h-1zM40 6h1v1h-1zM45 6h1v1h-1zM52 6h1v1h-1zM59 6h1v1h-1zM68 6h1v1h-1zM3 7h1v1h-1zM9 7h1v1h-1zM12 7h1v1h-1zM17 7h1v1h-1zM23 7h1v1h-1zM26 7h1v1h-1zM30 7h1v1h-1zM37 7h1v1h-1zM40 7h1v1h-1zM45 7h1v1h-1zM51 7h1v1h-1zM59 7h1v1h-1zM65 7h2v1h-2zM68 7h1v1h-1zM2 8h1v1h-1zM5 8h1v1h-1zM9 8h1v1h-1zM12 8h1v1h-1zM16 8h1v1h-1zM19 8h1v1h-1zM23 8h1v1h-1zM26 8h1v1h-1zM30 8h1v1h-1zM37 8h1v1h-1zM40 8h1v1h-1zM45 8h1v1h-1zM51 8h1v1h-1zM59 8h1v1h-1zM65 8h1v1h-1zM68 8h1v1h-1zM2 9h4v1h-4zM10 9h2v1h-2zM16 9h4v1h-4zM24 9h2v1h-2zM29 9h1v1h-1zM38 9h2v1h-2zM44 9h3v1h-3zM50 9h1v1h-1zM58 9h3v1h-3zM66 9h2v1h-2zM29 10h1v1h-1zM50 10h1v1h-1z"/></svg>
<svg class="jt" style="left:75px;top:571px" width="73" height="13"><path fill="#000" d="M3 1h2v1h-2zM17 1h2v1h-2zM24 1h1v1h-1zM37 1h4v1h-4zM46 1h1v1h-1zM59 1h2v1h-2zM2 2h1v1h-1zM5 2h1v1h-1zM10 2h2v1h-2zM16 2h1v1h-1zM19 2h1v1h-1zM23 2h2v1h-2zM31 2h2v1h-2zM37 2h1v1h-1zM45 2h2v1h-2zM58 2h1v1h-1zM61 2h1v1h-1zM2 3h1v1h-1zM5 3h1v1h-1zM10 3h2v1h-2zM16 3h1v1h-1zM19 3h1v1h-1zM24 3h1v1h-1zM31 3h2v1h-2zM37 3h1v1h-1zM45 3h2v1h-2zM58 3h1v1h-1zM60 3h2v1h-2zM2 4h1v1h-1zM5 4h1v1h-1zM16 4h1v1h-1zM19 4h1v1h-1zM24 4h1v1h-1zM37 4h3v1h-3zM44 4h1v1h-1zM46 4h1v1h-1zM58 4h1v1h-1zM3 5h2v1h-2zM16 5h1v1h-1zM19 5h1v1h-1zM24 5h1v1h-1zM37 5h1v1h-1zM40 5h1v1h-1zM44 5h1v1h-1zM46 5h1v1h-1zM58 5h3v1h-3zM2 6h1v1h-1zM5 6h1v1h-1zM16 6h1v1h-1zM19 6h1v1h-1zM24 6h1v1h-1zM40 6h1v1h-1zM43 6h1v1h-1zM46 6h1v1h-1zM58 6h1v1h-1zM61 6h1v1h-1zM2 7h1v1h-1zM5 7h1v1h-1zM10 7h2v1h-2zM16 7h1v1h-1zM19 7h1v1h-1zM24 7h1v1h-1zM31 7h2v1h-2zM37 7h2v1h-2zM40 7h1v1h-1zM43 7h5v1h-5zM58 7h1v1h-1zM61 7h1v1h-1zM2 8h1v1h-1zM5 8h1v1h-1zM10 8h2v1h-2zM16 8h1v1h-1zM19 8h1v1h-1zM24 8h1v1h-1zM31 8h2v1h-2zM37 8h1v1h-1zM40 8h1v1h-1zM46 8h1v1h-1zM52 8h2v1h-2zM58 8h1v1h-1zM61 8h1v1h-1zM3 9h2v1h-2zM17 9h2v1h-2zM23 9h3v1h-3zM38 9h2v1h-2zM45 9h3v1h-3zM52 9h2v1h-2zM59 9h2v1h-2z"/></svg>
<svg class="jt" style="left:218px;top:558px" width="80" height="13"><path fill="#000" d="M34 0h1v1h-1zM55 0h1v1h-1zM3 1h2v1h-2zM10 1h2v1h-2zM17 1h2v1h-2zM24 1h2v1h-2zM33 1h1v1h-1zM38 1h2v1h-2zM45 1h1v1h-1zM54 1h1v1h-1zM59 1h1v1h-1zM66 1h2v1h-2zM2 2h1v1h-1zM5 2h1v1h-1zM9 2h1v1h-1zM12 2h1v1h-1zM16 2h1v1h-1zM19 2h1v1h-1zM23 2h1v1h-1zM26 2h1v1h-1zM33 2h1v1h-1zM37 2h1v1h-1zM40 2h1v1h-1zM44 2h2v1h-2zM54 2h1v1h-1zM58 2h2v1h-2zM65 2h1v1h-1zM68 2h1v1h-1zM2 3h2v1h-2zM5 3h1v1h-1zM9 3h1v1h-1zM12 3h1v1h-1zM16 3h2v1h-2zM19 3h1v1h-1zM23 3h1v1h-1zM25 3h2v1h-2zM32 3h1v1h-1zM37 3h1v1h-1zM40 3h1v1h-1zM45 3h1v1h-1zM53 3h1v1h-1zM59 3h1v1h-1zM65 3h2v1h-2zM68 3h1v1h-1zM5 4h1v1h-1zM9 4h1v1h-1zM12 4h1v1h-1zM19 4h1v1h-1zM23 4h1v1h-1zM32 4h1v1h-1zM37 4h1v1h-1zM40 4h1v1h-1zM45 4h1v1h-1zM53 4h1v1h-1zM59 4h1v1h-1zM68 4h1v1h-1zM4 5h1v1h-1zM9 5h1v1h-1zM12 5h1v1h-1zM18 5h1v1h-1zM23 5h3v1h-3zM31 5h1v1h-1zM37 5h1v1h-1zM40 5h1v1h-1zM45 5h1v1h-1zM52 5h1v1h-1zM59 5h1v1h-1zM66 5h2v1h-2zM3 6h1v1h-1zM9 6h1v1h-1zM12 6h1v1h-1zM17 6h1v1h-1zM23 6h1v1h-1zM26 6h1v1h-1zM31 6h1v1h-1zM37 6h1v1h-1zM40 6h1v1h-1zM45 6h1v1h-1zM52 6h1v1h-1zM59 6h1v1h-1zM68 6h1v1h-1zM3 7h1v1h-1zM9 7h1v1h-1zM12 7h1v1h-1zM17 7h1v1h-1zM23 7h1v1h-1zM26 7h1v1h-1zM30 7h1v1h-1zM37 7h1v1h-1zM40 7h1v1h-1zM45 7h1v1h-1zM51 7h1v1h-1zM59 7h1v1h-1zM65 7h2v1h-2zM68 7h1v1h-1zM2 8h1v1h-1zM5 8h1v1h-1zM9 8h1v1h-1zM12 8h1v1h-1zM16 8h1v1h-1zM19 8h1v1h-1zM23 8h1v1h-1zM26 8h1v1h-1zM30 8h1v1h-1zM37 8h1v1h-1zM40 8h1v1h-1zM45 8h1v1h-1zM51 8h1v1h-1zM59 8h1v1h-1zM65 8h1v1h-1zM68 8h1v1h-1zM2 9h4v1h-4zM10 9h2v1h-2zM16 9h4v1h-4zM24 9h2v1h-2zM29 9h1v1h-1zM38 9h2v1h-2zM44 9h3v1h-3zM50 9h1v1h-1zM58 9h3v1h-3zM66 9h2v1h-2zM29 10h1v1h-1zM50 10h1v1h-1z"/></svg>
<svg class="jt" style="left:217px;top:571px" width="80" height="13"><path fill="#000" d="M3 1h1v1h-1zM10 1h1v1h-1zM23 1h4v1h-4zM31 1h1v1h-1zM46 1h1v1h-1zM53 1h1v1h-1zM66 1h2v1h-2zM2 2h2v1h-2zM9 2h2v1h-2zM17 2h2v1h-2zM23 2h1v1h-1zM30 2h2v1h-2zM38 2h2v1h-2zM45 2h2v1h-2zM52 2h2v1h-2zM65 2h1v1h-1zM68 2h1v1h-1zM3 3h1v1h-1zM10 3h1v1h-1zM17 3h2v1h-2zM23 3h1v1h-1zM31 3h1v1h-1zM38 3h2v1h-2zM45 3h2v1h-2zM52 3h2v1h-2zM65 3h1v1h-1zM67 3h2v1h-2zM3 4h1v1h-1zM10 4h1v1h-1zM23 4h3v1h-3zM31 4h1v1h-1zM44 4h1v1h-1zM46 4h1v1h-1zM51 4h1v1h-1zM53 4h1v1h-1zM65 4h1v1h-1zM3 5h1v1h-1zM10 5h1v1h-1zM23 5h1v1h-1zM26 5h1v1h-1zM31 5h1v1h-1zM44 5h1v1h-1zM46 5h1v1h-1zM51 5h1v1h-1zM53 5h1v1h-1zM65 5h3v1h-3zM3 6h1v1h-1zM10 6h1v1h-1zM26 6h1v1h-1zM31 6h1v1h-1zM43 6h1v1h-1zM46 6h1v1h-1zM50 6h1v1h-1zM53 6h1v1h-1zM65 6h1v1h-1zM68 6h1v1h-1zM3 7h1v1h-1zM10 7h1v1h-1zM17 7h2v1h-2zM23 7h2v1h-2zM26 7h1v1h-1zM31 7h1v1h-1zM38 7h2v1h-2zM43 7h5v1h-5zM50 7h5v1h-5zM65 7h1v1h-1zM68 7h1v1h-1zM3 8h1v1h-1zM10 8h1v1h-1zM17 8h2v1h-2zM23 8h1v1h-1zM26 8h1v1h-1zM31 8h1v1h-1zM38 8h2v1h-2zM46 8h1v1h-1zM53 8h1v1h-1zM59 8h2v1h-2zM65 8h1v1h-1zM68 8h1v1h-1zM2 9h3v1h-3zM9 9h3v1h-3zM24 9h2v1h-2zM30 9h3v1h-3zM45 9h3v1h-3zM52 9h3v1h-3zM59 9h2v1h-2zM66 9h2v1h-2z"/></svg>
<svg class="jt" style="left:361px;top:558px" width="80" height="13"><path fill="#000" d="M34 0h1v1h-1zM55 0h1v1h-1zM3 1h2v1h-2zM10 1h2v1h-2zM17 1h2v1h-2zM24 1h2v1h-2zM33 1h1v1h-1zM38 1h2v1h-2zM45 1h1v1h-1zM54 1h1v1h-1zM59 1h1v1h-1zM66 1h2v1h-2zM2 2h1v1h-1zM5 2h1v1h-1zM9 2h1v1h-1zM12 2h1v1h-1zM16 2h1v1h-1zM19 2h1v1h-1zM23 2h1v1h-1zM26 2h1v1h-1zM33 2h1v1h-1zM37 2h1v1h-1zM40 2h1v1h-1zM44 2h2v1h-2zM54 2h1v1h-1zM58 2h2v1h-2zM65 2h1v1h-1zM68 2h1v1h-1zM2 3h2v1h-2zM5 3h1v1h-1zM9 3h1v1h-1zM12 3h1v1h-1zM16 3h2v1h-2zM19 3h1v1h-1zM23 3h1v1h-1zM25 3h2v1h-2zM32 3h1v1h-1zM37 3h1v1h-1zM40 3h1v1h-1zM45 3h1v1h-1zM53 3h1v1h-1zM59 3h1v1h-1zM65 3h2v1h-2zM68 3h1v1h-1zM5 4h1v1h-1zM9 4h1v1h-1zM12 4h1v1h-1zM19 4h1v1h-1zM23 4h1v1h-1zM32 4h1v1h-1zM37 4h1v1h-1zM40 4h1v1h-1zM45 4h1v1h-1zM53 4h1v1h-1zM59 4h1v1h-1zM68 4h1v1h-1zM4 5h1v1h-1zM9 5h1v1h-1zM12 5h1v1h-1zM18 5h1v1h-1zM23 5h3v1h-3zM31 5h1v1h-1zM37 5h1v1h-1zM40 5h1v1h-1zM45 5h1v1h-1zM52 5h1v1h-1zM59 5h1v1h-1zM66 5h2v1h-2zM3 6h1v1h-1zM9 6h1v1h-1zM12 6h1v1h-1zM17 6h1v1h-1zM23 6h1v1h-1zM26 6h1v1h-1zM31 6h1v1h-1zM37 6h1v1h-1zM40 6h1v1h-1zM45 6h1v1h-1zM52 6h1v1h-1zM59 6h1v1h-1zM68 6h1v1h-1zM3 7h1v1h-1zM9 7h1v1h-1zM12 7h1v1h-1zM17 7h1v1h-1zM23 7h1v1h-1zM26 7h1v1h-1zM30 7h1v1h-1zM37 7h1v1h-1zM40 7h1v1h-1zM45 7h1v1h-1zM51 7h1v1h-1zM59 7h1v1h-1zM65 7h2v1h-2zM68 7h1v1h-1zM2 8h1v1h-1zM5 8h1v1h-1zM9 8h1v1h-1zM12 8h1v1h-1zM16 8h1v1h-1zM19 8h1v1h-1zM23 8h1v1h-1zM26 8h1v1h-1zM30 8h1v1h-1zM37 8h1v1h-1zM40 8h1v1h-1zM45 8h1v1h-1zM51 8h1v1h-1zM59 8h1v1h-1zM65 8h1v1h-1zM68 8h1v1h-1zM2 9h4v1h-4zM10 9h2v1h-2zM16 9h4v1h-4zM24 9h2v1h-2zM29 9h1v1h-1zM38 9h2v1h-2zM44 9h3v1h-3zM50 9h1v1h-1zM58 9h3v1h-3zM66 9h2v1h-2zM29 10h1v1h-1zM50 10h1v1h-1z"/></svg>
<svg class="jt" style="left:360px;top:571px" width="80" height="13"><path fill="#000" d="M3 1h1v1h-1zM9 1h4v1h-4zM25 1h1v1h-1zM31 1h1v1h-1zM45 1h2v1h-2zM53 1h1v1h-1zM66 1h2v1h-2zM2 2h2v1h-2zM9 2h1v1h-1zM17 2h2v1h-2zM24 2h2v1h-2zM30 2h2v1h-2zM38 2h2v1h-2zM44 2h1v1h-1zM47 2h1v1h-1zM52 2h2v1h-2zM65 2h1v1h-1zM68 2h1v1h-1zM3 3h1v1h-1zM9 3h1v1h-1zM17 3h2v1h-2zM24 3h2v1h-2zM31 3h1v1h-1zM38 3h2v1h-2zM44 3h2v1h-2zM47 3h1v1h-1zM52 3h2v1h-2zM65 3h1v1h-1zM67 3h2v1h-2zM3 4h1v1h-1zM9 4h3v1h-3zM23 4h1v1h-1zM25 4h1v1h-1zM31 4h1v1h-1zM47 4h1v1h-1zM51 4h1v1h-1zM53 4h1v1h-1zM65 4h1v1h-1zM3 5h1v1h-1zM9 5h1v1h-1zM12 5h1v1h-1zM23 5h1v1h-1zM25 5h1v1h-1zM31 5h1v1h-1zM45 5h2v1h-2zM51 5h1v1h-1zM53 5h1v1h-1zM65 5h3v1h-3zM3 6h1v1h-1zM12 6h1v1h-1zM22 6h1v1h-1zM25 6h1v1h-1zM31 6h1v1h-1zM47 6h1v1h-1zM50 6h1v1h-1zM53 6h1v1h-1zM65 6h1v1h-1zM68 6h1v1h-1zM3 7h1v1h-1zM9 7h2v1h-2zM12 7h1v1h-1zM17 7h2v1h-2zM22 7h5v1h-5zM31 7h1v1h-1zM38 7h2v1h-2zM44 7h2v1h-2zM47 7h1v1h-1zM50 7h5v1h-5zM65 7h1v1h-1zM68 7h1v1h-1zM3 8h1v1h-1zM9 8h1v1h-1zM12 8h1v1h-1zM17 8h2v1h-2zM25 8h1v1h-1zM31 8h1v1h-1zM38 8h2v1h-2zM44 8h1v1h-1zM47 8h1v1h-1zM53 8h1v1h-1zM59 8h2v1h-2zM65 8h1v1h-1zM68 8h1v1h-1zM2 9h3v1h-3zM10 9h2v1h-2zM24 9h3v1h-3zM30 9h3v1h-3zM45 9h2v1h-2zM52 9h3v1h-3zM59 9h2v1h-2zM66 9h2v1h-2z"/></svg>
<svg class="jt" style="left:502px;top:558px" width="80" height="13"><path fill="#000" d="M34 0h1v1h-1zM55 0h1v1h-1zM3 1h2v1h-2zM10 1h2v1h-2zM17 1h2v1h-2zM24 1h2v1h-2zM33 1h1v1h-1zM38 1h2v1h-2zM45 1h1v1h-1zM54 1h1v1h-1zM59 1h1v1h-1zM66 1h2v1h-2zM2 2h1v1h-1zM5 2h1v1h-1zM9 2h1v1h-1zM12 2h1v1h-1zM16 2h1v1h-1zM19 2h1v1h-1zM23 2h1v1h-1zM26 2h1v1h-1zM33 2h1v1h-1zM37 2h1v1h-1zM40 2h1v1h-1zM44 2h2v1h-2zM54 2h1v1h-1zM58 2h2v1h-2zM65 2h1v1h-1zM68 2h1v1h-1zM2 3h2v1h-2zM5 3h1v1h-1zM9 3h1v1h-1zM12 3h1v1h-1zM16 3h2v1h-2zM19 3h1v1h-1zM23 3h1v1h-1zM25 3h2v1h-2zM32 3h1v1h-1zM37 3h1v1h-1zM40 3h1v1h-1zM45 3h1v1h-1zM53 3h1v1h-1zM59 3h1v1h-1zM65 3h2v1h-2zM68 3h1v1h-1zM5 4h1v1h-1zM9 4h1v1h-1zM12 4h1v1h-1zM19 4h1v1h-1zM23 4h1v1h-1zM32 4h1v1h-1zM37 4h1v1h-1zM40 4h1v1h-1zM45 4h1v1h-1zM53 4h1v1h-1zM59 4h1v1h-1zM68 4h1v1h-1zM4 5h1v1h-1zM9 5h1v1h-1zM12 5h1v1h-1zM18 5h1v1h-1zM23 5h3v1h-3zM31 5h1v1h-1zM37 5h1v1h-1zM40 5h1v1h-1zM45 5h1v1h-1zM52 5h1v1h-1zM59 5h1v1h-1zM66 5h2v1h-2zM3 6h1v1h-1zM9 6h1v1h-1zM12 6h1v1h-1zM17 6h1v1h-1zM23 6h1v1h-1zM26 6h1v1h-1zM31 6h1v1h-1zM37 6h1v1h-1zM40 6h1v1h-1zM45 6h1v1h-1zM52 6h1v1h-1zM59 6h1v1h-1zM68 6h1v1h-1zM3 7h1v1h-1zM9 7h1v1h-1zM12 7h1v1h-1zM17 7h1v1h-1zM23 7h1v1h-1zM26 7h1v1h-1zM30 7h1v1h-1zM37 7h1v1h-1zM40 7h1v1h-1zM45 7h1v1h-1zM51 7h1v1h-1zM59 7h1v1h-1zM65 7h2v1h-2zM68 7h1v1h-1zM2 8h1v1h-1zM5 8h1v1h-1zM9 8h1v1h-1zM12 8h1v1h-1zM16 8h1v1h-1zM19 8h1v1h-1zM23 8h1v1h-1zM26 8h1v1h-1zM30 8h1v1h-1zM37 8h1v1h-1zM40 8h1v1h-1zM45 8h1v1h-1zM51 8h1v1h-1zM59 8h1v1h-1zM65 8h1v1h-1zM68 8h1v1h-1zM2 9h4v1h-4zM10 9h2v1h-2zM16 9h4v1h-4zM24 9h2v1h-2zM29 9h1v1h-1zM38 9h2v1h-2zM44 9h3v1h-3zM50 9h1v1h-1zM58 9h3v1h-3zM66 9h2v1h-2zM29 10h1v1h-1zM50 10h1v1h-1z"/></svg>
<svg class="jt" style="left:501px;top:571px" width="80" height="13"><path fill="#000" d="M3 1h1v1h-1zM10 1h2v1h-2zM24 1h2v1h-2zM31 1h1v1h-1zM45 1h2v1h-2zM53 1h1v1h-1zM66 1h2v1h-2zM2 2h2v1h-2zM9 2h1v1h-1zM12 2h1v1h-1zM17 2h2v1h-2zM23 2h1v1h-1zM26 2h1v1h-1zM30 2h2v1h-2zM38 2h2v1h-2zM44 2h1v1h-1zM47 2h1v1h-1zM52 2h2v1h-2zM65 2h1v1h-1zM68 2h1v1h-1zM3 3h1v1h-1zM9 3h1v1h-1zM12 3h1v1h-1zM17 3h2v1h-2zM23 3h2v1h-2zM26 3h1v1h-1zM31 3h1v1h-1zM38 3h2v1h-2zM44 3h2v1h-2zM47 3h1v1h-1zM52 3h2v1h-2zM65 3h1v1h-1zM67 3h2v1h-2zM3 4h1v1h-1zM9 4h1v1h-1zM12 4h1v1h-1zM26 4h1v1h-1zM31 4h1v1h-1zM47 4h1v1h-1zM51 4h1v1h-1zM53 4h1v1h-1zM65 4h1v1h-1zM3 5h1v1h-1zM10 5h3v1h-3zM24 5h2v1h-2zM31 5h1v1h-1zM46 5h1v1h-1zM51 5h1v1h-1zM53 5h1v1h-1zM65 5h3v1h-3zM3 6h1v1h-1zM12 6h1v1h-1zM26 6h1v1h-1zM31 6h1v1h-1zM45 6h1v1h-1zM50 6h1v1h-1zM53 6h1v1h-1zM65 6h1v1h-1zM68 6h1v1h-1zM3 7h1v1h-1zM9 7h2v1h-2zM12 7h1v1h-1zM17 7h2v1h-2zM23 7h2v1h-2zM26 7h1v1h-1zM31 7h1v1h-1zM38 7h2v1h-2zM45 7h1v1h-1zM50 7h5v1h-5zM65 7h1v1h-1zM68 7h1v1h-1zM3 8h1v1h-1zM9 8h1v1h-1zM12 8h1v1h-1zM17 8h2v1h-2zM23 8h1v1h-1zM26 8h1v1h-1zM31 8h1v1h-1zM38 8h2v1h-2zM44 8h1v1h-1zM47 8h1v1h-1zM53 8h1v1h-1zM59 8h2v1h-2zM65 8h1v1h-1zM68 8h1v1h-1zM2 9h3v1h-3zM10 9h2v1h-2zM24 9h2v1h-2zM30 9h3v1h-3zM44 9h4v1h-4zM52 9h3v1h-3zM59 9h2v1h-2zM66 9h2v1h-2z"/></svg>
<svg class="jt" style="left:645px;top:558px" width="80" height="13"><path fill="#000" d="M34 0h1v1h-1zM55 0h1v1h-1zM3 1h2v1h-2zM10 1h2v1h-2zM17 1h2v1h-2zM24 1h2v1h-2zM33 1h1v1h-1zM38 1h2v1h-2zM45 1h1v1h-1zM54 1h1v1h-1zM59 1h1v1h-1zM66 1h2v1h-2zM2 2h1v1h-1zM5 2h1v1h-1zM9 2h1v1h-1zM12 2h1v1h-1zM16 2h1v1h-1zM19 2h1v1h-1zM23 2h1v1h-1zM26 2h1v1h-1zM33 2h1v1h-1zM37 2h1v1h-1zM40 2h1v1h-1zM44 2h2v1h-2zM54 2h1v1h-1zM58 2h2v1h-2zM65 2h1v1h-1zM68 2h1v1h-1zM2 3h2v1h-2zM5 3h1v1h-1zM9 3h1v1h-1zM12 3h1v1h-1zM16 3h2v1h-2zM19 3h1v1h-1zM23 3h1v1h-1zM25 3h2v1h-2zM32 3h1v1h-1zM37 3h1v1h-1zM40 3h1v1h-1zM45 3h1v1h-1zM53 3h1v1h-1zM59 3h1v1h-1zM65 3h2v1h-2zM68 3h1v1h-1zM5 4h1v1h-1zM9 4h1v1h-1zM12 4h1v1h-1zM19 4h1v1h-1zM23 4h1v1h-1zM32 4h1v1h-1zM37 4h1v1h-1zM40 4h1v1h-1zM45 4h1v1h-1zM53 4h1v1h-1zM59 4h1v1h-1zM68 4h1v1h-1zM4 5h1v1h-1zM9 5h1v1h-1zM12 5h1v1h-1zM18 5h1v1h-1zM23 5h3v1h-3zM31 5h1v1h-1zM37 5h1v1h-1zM40 5h1v1h-1zM45 5h1v1h-1zM52 5h1v1h-1zM59 5h1v1h-1zM66 5h2v1h-2zM3 6h1v1h-1zM9 6h1v1h-1zM12 6h1v1h-1zM17 6h1v1h-1zM23 6h1v1h-1zM26 6h1v1h-1zM31 6h1v1h-1zM37 6h1v1h-1zM40 6h1v1h-1zM45 6h1v1h-1zM52 6h1v1h-1zM59 6h1v1h-1zM68 6h1v1h-1zM3 7h1v1h-1zM9 7h1v1h-1zM12 7h1v1h-1zM17 7h1v1h-1zM23 7h1v1h-1zM26 7h1v1h-1zM30 7h1v1h-1zM37 7h1v1h-1zM40 7h1v1h-1zM45 7h1v1h-1zM51 7h1v1h-1zM59 7h1v1h-1zM65 7h2v1h-2zM68 7h1v1h-1zM2 8h1v1h-1zM5 8h1v1h-1zM9 8h1v1h-1zM12 8h1v1h-1zM16 8h1v1h-1zM19 8h1v1h-1zM23 8h1v1h-1zM26 8h1v1h-1zM30 8h1v1h-1zM37 8h1v1h-1zM40 8h1v1h-1zM45 8h1v1h-1zM51 8h1v1h-1zM59 8h1v1h-1zM65 8h1v1h-1zM68 8h1v1h-1zM2 9h4v1h-4zM10 9h2v1h-2zM16 9h4v1h-4zM24 9h2v1h-2zM29 9h1v1h-1zM38 9h2v1h-2zM44 9h3v1h-3zM50 9h1v1h-1zM58 9h3v1h-3zM66 9h2v1h-2zM29 10h1v1h-1zM50 10h1v1h-1z"/></svg>
<svg class="jt" style="left:644px;top:571px" width="80" height="13"><path fill="#000" d="M3 1h2v1h-2zM10 1h2v1h-2zM24 1h2v1h-2zM31 1h1v1h-1zM45 1h1v1h-1zM53 1h1v1h-1zM66 1h2v1h-2zM2 2h1v1h-1zM5 2h1v1h-1zM9 2h1v1h-1zM12 2h1v1h-1zM17 2h2v1h-2zM23 2h1v1h-1zM26 2h1v1h-1zM30 2h2v1h-2zM38 2h2v1h-2zM44 2h2v1h-2zM52 2h2v1h-2zM65 2h1v1h-1zM68 2h1v1h-1zM2 3h2v1h-2zM5 3h1v1h-1zM9 3h2v1h-2zM12 3h1v1h-1zM17 3h2v1h-2zM23 3h2v1h-2zM26 3h1v1h-1zM31 3h1v1h-1zM38 3h2v1h-2zM45 3h1v1h-1zM52 3h2v1h-2zM65 3h1v1h-1zM67 3h2v1h-2zM5 4h1v1h-1zM12 4h1v1h-1zM26 4h1v1h-1zM31 4h1v1h-1zM45 4h1v1h-1zM51 4h1v1h-1zM53 4h1v1h-1zM65 4h1v1h-1zM4 5h1v1h-1zM10 5h2v1h-2zM25 5h1v1h-1zM31 5h1v1h-1zM45 5h1v1h-1zM51 5h1v1h-1zM53 5h1v1h-1zM65 5h3v1h-3zM3 6h1v1h-1zM12 6h1v1h-1zM24 6h1v1h-1zM31 6h1v1h-1zM45 6h1v1h-1zM50 6h1v1h-1zM53 6h1v1h-1zM65 6h1v1h-1zM68 6h1v1h-1zM3 7h1v1h-1zM9 7h2v1h-2zM12 7h1v1h-1zM17 7h2v1h-2zM24 7h1v1h-1zM31 7h1v1h-1zM38 7h2v1h-2zM45 7h1v1h-1zM50 7h5v1h-5zM65 7h1v1h-1zM68 7h1v1h-1zM2 8h1v1h-1zM5 8h1v1h-1zM9 8h1v1h-1zM12 8h1v1h-1zM17 8h2v1h-2zM23 8h1v1h-1zM26 8h1v1h-1zM31 8h1v1h-1zM38 8h2v1h-2zM45 8h1v1h-1zM53 8h1v1h-1zM59 8h2v1h-2zM65 8h1v1h-1zM68 8h1v1h-1zM2 9h4v1h-4zM10 9h2v1h-2zM23 9h4v1h-4zM30 9h3v1h-3zM44 9h3v1h-3zM52 9h3v1h-3zM59 9h2v1h-2zM66 9h2v1h-2z"/></svg>
<svg class="jt" style="left:787px;top:558px" width="80" height="13"><path fill="#000" d="M34 0h1v1h-1zM55 0h1v1h-1zM3 1h2v1h-2zM10 1h2v1h-2zM17 1h2v1h-2zM24 1h2v1h-2zM33 1h1v1h-1zM38 1h2v1h-2zM45 1h1v1h-1zM54 1h1v1h-1zM59 1h1v1h-1zM67 1h1v1h-1zM2 2h1v1h-1zM5 2h1v1h-1zM9 2h1v1h-1zM12 2h1v1h-1zM16 2h1v1h-1zM19 2h1v1h-1zM23 2h1v1h-1zM26 2h1v1h-1zM33 2h1v1h-1zM37 2h1v1h-1zM40 2h1v1h-1zM44 2h2v1h-2zM54 2h1v1h-1zM58 2h2v1h-2zM66 2h2v1h-2zM2 3h2v1h-2zM5 3h1v1h-1zM9 3h1v1h-1zM12 3h1v1h-1zM16 3h2v1h-2zM19 3h1v1h-1zM23 3h1v1h-1zM25 3h2v1h-2zM32 3h1v1h-1zM37 3h1v1h-1zM40 3h1v1h-1zM45 3h1v1h-1zM53 3h1v1h-1zM59 3h1v1h-1zM66 3h2v1h-2zM5 4h1v1h-1zM9 4h1v1h-1zM12 4h1v1h-1zM19 4h1v1h-1zM23 4h1v1h-1zM32 4h1v1h-1zM37 4h1v1h-1zM40 4h1v1h-1zM45 4h1v1h-1zM53 4h1v1h-1zM59 4h1v1h-1zM65 4h1v1h-1zM67 4h1v1h-1zM4 5h1v1h-1zM9 5h1v1h-1zM12 5h1v1h-1zM18 5h1v1h-1zM23 5h3v1h-3zM31 5h1v1h-1zM37 5h1v1h-1zM40 5h1v1h-1zM45 5h1v1h-1zM52 5h1v1h-1zM59 5h1v1h-1zM65 5h1v1h-1zM67 5h1v1h-1zM3 6h1v1h-1zM9 6h1v1h-1zM12 6h1v1h-1zM17 6h1v1h-1zM23 6h1v1h-1zM26 6h1v1h-1zM31 6h1v1h-1zM37 6h1v1h-1zM40 6h1v1h-1zM45 6h1v1h-1zM52 6h1v1h-1zM59 6h1v1h-1zM64 6h1v1h-1zM67 6h1v1h-1zM3 7h1v1h-1zM9 7h1v1h-1zM12 7h1v1h-1zM17 7h1v1h-1zM23 7h1v1h-1zM26 7h1v1h-1zM30 7h1v1h-1zM37 7h1v1h-1zM40 7h1v1h-1zM45 7h1v1h-1zM51 7h1v1h-1zM59 7h1v1h-1zM64 7h5v1h-5zM2 8h1v1h-1zM5 8h1v1h-1zM9 8h1v1h-1zM12 8h1v1h-1zM16 8h1v1h-1zM19 8h1v1h-1zM23 8h1v1h-1zM26 8h1v1h-1zM30 8h1v1h-1zM37 8h1v1h-1zM40 8h1v1h-1zM45 8h1v1h-1zM51 8h1v1h-1zM59 8h1v1h-1zM67 8h1v1h-1zM2 9h4v1h-4zM10 9h2v1h-2zM16 9h4v1h-4zM24 9h2v1h-2zM29 9h1v1h-1zM38 9h2v1h-2zM44 9h3v1h-3zM50 9h1v1h-1zM58 9h3v1h-3zM66 9h3v1h-3zM29 10h1v1h-1zM50 10h1v1h-1z"/></svg>
<svg class="jt" style="left:786px;top:571px" width="73" height="13"><path fill="#000" d="M3 1h2v1h-2zM17 1h1v1h-1zM24 1h1v1h-1zM38 1h2v1h-2zM46 1h1v1h-1zM59 1h2v1h-2zM2 2h1v1h-1zM5 2h1v1h-1zM10 2h2v1h-2zM16 2h2v1h-2zM23 2h2v1h-2zM31 2h2v1h-2zM37 2h1v1h-1zM40 2h1v1h-1zM45 2h2v1h-2zM58 2h1v1h-1zM61 2h1v1h-1zM2 3h2v1h-2zM5 3h1v1h-1zM10 3h2v1h-2zM17 3h1v1h-1zM24 3h1v1h-1zM31 3h2v1h-2zM37 3h1v1h-1zM40 3h1v1h-1zM45 3h2v1h-2zM58 3h1v1h-1zM60 3h2v1h-2zM5 4h1v1h-1zM17 4h1v1h-1zM24 4h1v1h-1zM37 4h1v1h-1zM40 4h1v1h-1zM44 4h1v1h-1zM46 4h1v1h-1zM58 4h1v1h-1zM3 5h2v1h-2zM17 5h1v1h-1zM24 5h1v1h-1zM37 5h1v1h-1zM40 5h1v1h-1zM44 5h1v1h-1zM46 5h1v1h-1zM58 5h3v1h-3zM5 6h1v1h-1zM17 6h1v1h-1zM24 6h1v1h-1zM37 6h1v1h-1zM40 6h1v1h-1zM43 6h1v1h-1zM46 6h1v1h-1zM58 6h1v1h-1zM61 6h1v1h-1zM2 7h2v1h-2zM5 7h1v1h-1zM10 7h2v1h-2zM17 7h1v1h-1zM24 7h1v1h-1zM31 7h2v1h-2zM37 7h1v1h-1zM40 7h1v1h-1zM43 7h5v1h-5zM58 7h1v1h-1zM61 7h1v1h-1zM2 8h1v1h-1zM5 8h1v1h-1zM10 8h2v1h-2zM17 8h1v1h-1zM24 8h1v1h-1zM31 8h2v1h-2zM37 8h1v1h-1zM40 8h1v1h-1zM46 8h1v1h-1zM52 8h2v1h-2zM58 8h1v1h-1zM61 8h1v1h-1zM3 9h2v1h-2zM16 9h3v1h-3zM23 9h3v1h-3zM38 9h2v1h-2zM45 9h3v1h-3zM52 9h2v1h-2zM59 9h2v1h-2z"/></svg>
<svg class="jt" style="left:930px;top:558px" width="80" height="13"><path fill="#000" d="M34 0h1v1h-1zM55 0h1v1h-1zM3 1h2v1h-2zM10 1h2v1h-2zM17 1h2v1h-2zM24 1h2v1h-2zM33 1h1v1h-1zM38 1h2v1h-2zM45 1h1v1h-1zM54 1h1v1h-1zM59 1h1v1h-1zM67 1h1v1h-1zM2 2h1v1h-1zM5 2h1v1h-1zM9 2h1v1h-1zM12 2h1v1h-1zM16 2h1v1h-1zM19 2h1v1h-1zM23 2h1v1h-1zM26 2h1v1h-1zM33 2h1v1h-1zM37 2h1v1h-1zM40 2h1v1h-1zM44 2h2v1h-2zM54 2h1v1h-1zM58 2h2v1h-2zM66 2h2v1h-2zM2 3h2v1h-2zM5 3h1v1h-1zM9 3h1v1h-1zM12 3h1v1h-1zM16 3h2v1h-2zM19 3h1v1h-1zM23 3h1v1h-1zM25 3h2v1h-2zM32 3h1v1h-1zM37 3h1v1h-1zM40 3h1v1h-1zM45 3h1v1h-1zM53 3h1v1h-1zM59 3h1v1h-1zM66 3h2v1h-2zM5 4h1v1h-1zM9 4h1v1h-1zM12 4h1v1h-1zM19 4h1v1h-1zM23 4h1v1h-1zM32 4h1v1h-1zM37 4h1v1h-1zM40 4h1v1h-1zM45 4h1v1h-1zM53 4h1v1h-1zM59 4h1v1h-1zM65 4h1v1h-1zM67 4h1v1h-1zM4 5h1v1h-1zM9 5h1v1h-1zM12 5h1v1h-1zM18 5h1v1h-1zM23 5h3v1h-3zM31 5h1v1h-1zM37 5h1v1h-1zM40 5h1v1h-1zM45 5h1v1h-1zM52 5h1v1h-1zM59 5h1v1h-1zM65 5h1v1h-1zM67 5h1v1h-1zM3 6h1v1h-1zM9 6h1v1h-1zM12 6h1v1h-1zM17 6h1v1h-1zM23 6h1v1h-1zM26 6h1v1h-1zM31 6h1v1h-1zM37 6h1v1h-1zM40 6h1v1h-1zM45 6h1v1h-1zM52 6h1v1h-1zM59 6h1v1h-1zM64 6h1v1h-1zM67 6h1v1h-1zM3 7h1v1h-1zM9 7h1v1h-1zM12 7h1v1h-1zM17 7h1v1h-1zM23 7h1v1h-1zM26 7h1v1h-1zM30 7h1v1h-1zM37 7h1v1h-1zM40 7h1v1h-1zM45 7h1v1h-1zM51 7h1v1h-1zM59 7h1v1h-1zM64 7h5v1h-5zM2 8h1v1h-1zM5 8h1v1h-1zM9 8h1v1h-1zM12 8h1v1h-1zM16 8h1v1h-1zM19 8h1v1h-1zM23 8h1v1h-1zM26 8h1v1h-1zM30 8h1v1h-1zM37 8h1v1h-1zM40 8h1v1h-1zM45 8h1v1h-1zM51 8h1v1h-1zM59 8h1v1h-1zM67 8h1v1h-1zM2 9h4v1h-4zM10 9h2v1h-2zM16 9h4v1h-4zM24 9h2v1h-2zM29 9h1v1h-1zM38 9h2v1h-2zM44 9h3v1h-3zM50 9h1v1h-1zM58 9h3v1h-3zM66 9h3v1h-3zM29 10h1v1h-1zM50 10h1v1h-1z"/></svg>
<svg class="jt" style="left:929px;top:571px" width="73" height="13"><path fill="#000" d="M2 1h4v1h-4zM17 1h2v1h-2zM24 1h2v1h-2zM37 1h4v1h-4zM46 1h1v1h-1zM59 1h2v1h-2zM2 2h1v1h-1zM5 2h1v1h-1zM10 2h2v1h-2zM16 2h1v1h-1zM19 2h1v1h-1zM23 2h1v1h-1zM26 2h1v1h-1zM31 2h2v1h-2zM37 2h1v1h-1zM45 2h2v1h-2zM58 2h1v1h-1zM61 2h1v1h-1zM5 3h1v1h-1zM10 3h2v1h-2zM16 3h1v1h-1zM19 3h1v1h-1zM23 3h1v1h-1zM26 3h1v1h-1zM31 3h2v1h-2zM37 3h1v1h-1zM45 3h2v1h-2zM58 3h1v1h-1zM60 3h2v1h-2zM4 4h1v1h-1zM16 4h1v1h-1zM19 4h1v1h-1zM23 4h1v1h-1zM26 4h1v1h-1zM37 4h3v1h-3zM44 4h1v1h-1zM46 4h1v1h-1zM58 4h1v1h-1zM4 5h1v1h-1zM16 5h1v1h-1zM19 5h1v1h-1zM23 5h1v1h-1zM26 5h1v1h-1zM37 5h1v1h-1zM40 5h1v1h-1zM44 5h1v1h-1zM46 5h1v1h-1zM58 5h3v1h-3zM4 6h1v1h-1zM16 6h1v1h-1zM19 6h1v1h-1zM23 6h1v1h-1zM26 6h1v1h-1zM40 6h1v1h-1zM43 6h1v1h-1zM46 6h1v1h-1zM58 6h1v1h-1zM61 6h1v1h-1zM3 7h1v1h-1zM10 7h2v1h-2zM16 7h1v1h-1zM19 7h1v1h-1zM23 7h1v1h-1zM26 7h1v1h-1zM31 7h2v1h-2zM37 7h2v1h-2zM40 7h1v1h-1zM43 7h5v1h-5zM58 7h1v1h-1zM61 7h1v1h-1zM3 8h1v1h-1zM10 8h2v1h-2zM16 8h1v1h-1zM19 8h1v1h-1zM23 8h1v1h-1zM26 8h1v1h-1zM31 8h2v1h-2zM37 8h1v1h-1zM40 8h1v1h-1zM46 8h1v1h-1zM52 8h2v1h-2zM58 8h1v1h-1zM61 8h1v1h-1zM3 9h1v1h-1zM17 9h2v1h-2zM24 9h2v1h-2zM38 9h2v1h-2zM45 9h3v1h-3zM52 9h2v1h-2zM59 9h2v1h-2z"/></svg>
<svg class="jt" style="left:16px;top:607px" width="122" height="13"><path fill="#804000" d="M82 0h1v1h-1zM106 0h1v1h-1zM8 1h1v1h-1zM12 1h1v1h-1zM15 1h4v1h-4zM22 1h5v1h-5zM36 1h4v1h-4zM44 1h3v1h-3zM52 1h2v1h-2zM59 1h2v1h-2zM66 1h2v1h-2zM71 1h1v1h-1zM75 1h1v1h-1zM81 1h1v1h-1zM94 1h2v1h-2zM101 1h2v1h-2zM107 1h1v1h-1zM8 2h2v1h-2zM11 2h2v1h-2zM16 2h1v1h-1zM19 2h1v1h-1zM23 2h1v1h-1zM26 2h1v1h-1zM37 2h1v1h-1zM40 2h1v1h-1zM43 2h1v1h-1zM47 2h1v1h-1zM51 2h1v1h-1zM54 2h1v1h-1zM58 2h1v1h-1zM61 2h1v1h-1zM65 2h1v1h-1zM68 2h1v1h-1zM71 2h1v1h-1zM75 2h1v1h-1zM81 2h1v1h-1zM93 2h1v1h-1zM96 2h1v1h-1zM100 2h1v1h-1zM103 2h1v1h-1zM107 2h1v1h-1zM8 3h2v1h-2zM11 3h2v1h-2zM16 3h1v1h-1zM19 3h1v1h-1zM23 3h1v1h-1zM37 3h1v1h-1zM40 3h1v1h-1zM43 3h1v1h-1zM51 3h2v1h-2zM54 3h1v1h-1zM58 3h1v1h-1zM61 3h1v1h-1zM65 3h1v1h-1zM68 3h1v1h-1zM71 3h1v1h-1zM75 3h1v1h-1zM80 3h1v1h-1zM87 3h1v1h-1zM93 3h2v1h-2zM96 3h1v1h-1zM100 3h1v1h-1zM103 3h1v1h-1zM108 3h1v1h-1zM2 4h3v1h-3zM8 4h1v1h-1zM10 4h1v1h-1zM12 4h1v1h-1zM16 4h1v1h-1zM19 4h1v1h-1zM23 4h1v1h-1zM25 4h1v1h-1zM37 4h1v1h-1zM40 4h1v1h-1zM43 4h1v1h-1zM54 4h1v1h-1zM58 4h1v1h-1zM61 4h1v1h-1zM65 4h1v1h-1zM68 4h1v1h-1zM72 4h1v1h-1zM74 4h1v1h-1zM80 4h1v1h-1zM87 4h1v1h-1zM96 4h1v1h-1zM100 4h1v1h-1zM103 4h1v1h-1zM108 4h1v1h-1zM1 5h1v1h-1zM5 5h1v1h-1zM8 5h1v1h-1zM10 5h1v1h-1zM12 5h1v1h-1zM16 5h1v1h-1zM19 5h1v1h-1zM23 5h3v1h-3zM30 5h4v1h-4zM37 5h1v1h-1zM40 5h1v1h-1zM43 5h1v1h-1zM53 5h1v1h-1zM58 5h1v1h-1zM61 5h1v1h-1zM65 5h1v1h-1zM68 5h1v1h-1zM72 5h1v1h-1zM74 5h1v1h-1zM80 5h1v1h-1zM85 5h5v1h-5zM94 5h2v1h-2zM100 5h1v1h-1zM103 5h1v1h-1zM108 5h1v1h-1zM2 6h2v1h-2zM8 6h1v1h-1zM10 6h1v1h-1zM12 6h1v1h-1zM16 6h1v1h-1zM19 6h1v1h-1zM23 6h1v1h-1zM25 6h1v1h-1zM37 6h1v1h-1zM40 6h1v1h-1zM43 6h1v1h-1zM52 6h1v1h-1zM58 6h1v1h-1zM61 6h1v1h-1zM65 6h1v1h-1zM68 6h1v1h-1zM72 6h1v1h-1zM74 6h1v1h-1zM80 6h1v1h-1zM87 6h1v1h-1zM96 6h1v1h-1zM100 6h1v1h-1zM103 6h1v1h-1zM108 6h1v1h-1zM4 7h1v1h-1zM8 7h1v1h-1zM10 7h1v1h-1zM12 7h1v1h-1zM16 7h1v1h-1zM19 7h1v1h-1zM23 7h1v1h-1zM37 7h1v1h-1zM40 7h1v1h-1zM43 7h1v1h-1zM52 7h1v1h-1zM58 7h1v1h-1zM61 7h1v1h-1zM65 7h1v1h-1zM68 7h1v1h-1zM72 7h1v1h-1zM74 7h1v1h-1zM80 7h1v1h-1zM87 7h1v1h-1zM93 7h2v1h-2zM96 7h1v1h-1zM100 7h1v1h-1zM103 7h1v1h-1zM108 7h1v1h-1zM1 8h1v1h-1zM5 8h1v1h-1zM8 8h1v1h-1zM12 8h1v1h-1zM16 8h1v1h-1zM19 8h1v1h-1zM23 8h1v1h-1zM37 8h1v1h-1zM40 8h1v1h-1zM43 8h1v1h-1zM47 8h1v1h-1zM51 8h1v1h-1zM54 8h1v1h-1zM58 8h1v1h-1zM61 8h1v1h-1zM65 8h1v1h-1zM68 8h1v1h-1zM73 8h1v1h-1zM81 8h1v1h-1zM93 8h1v1h-1zM96 8h1v1h-1zM100 8h1v1h-1zM103 8h1v1h-1zM107 8h1v1h-1zM2 9h3v1h-3zM8 9h1v1h-1zM12 9h1v1h-1zM15 9h4v1h-4zM22 9h3v1h-3zM36 9h4v1h-4zM44 9h3v1h-3zM51 9h4v1h-4zM59 9h2v1h-2zM66 9h2v1h-2zM73 9h1v1h-1zM81 9h1v1h-1zM94 9h2v1h-2zM101 9h2v1h-2zM107 9h1v1h-1zM82 10h1v1h-1zM106 10h1v1h-1z"/></svg>
<svg class="jt" style="left:16px;top:620px" width="66" height="13"><path fill="#804000" d="M31 0h3v1h-3zM50 0h3v1h-3zM2 1h3v1h-3zM8 1h1v1h-1zM12 1h1v1h-1zM17 1h1v1h-1zM31 1h1v1h-1zM38 1h1v1h-1zM42 1h4v1h-4zM47 1h1v1h-1zM52 1h1v1h-1zM1 2h1v1h-1zM5 2h1v1h-1zM8 2h1v1h-1zM12 2h1v1h-1zM16 2h2v1h-2zM31 2h1v1h-1zM37 2h1v1h-1zM39 2h1v1h-1zM41 2h1v1h-1zM46 2h2v1h-2zM52 2h1v1h-1zM1 3h1v1h-1zM8 3h1v1h-1zM12 3h1v1h-1zM17 3h1v1h-1zM31 3h1v1h-1zM38 3h1v1h-1zM40 3h1v1h-1zM47 3h1v1h-1zM52 3h1v1h-1zM1 4h1v1h-1zM8 4h1v1h-1zM12 4h1v1h-1zM17 4h1v1h-1zM31 4h1v1h-1zM40 4h1v1h-1zM52 4h1v1h-1zM1 5h1v1h-1zM8 5h5v1h-5zM17 5h1v1h-1zM31 5h1v1h-1zM40 5h1v1h-1zM52 5h1v1h-1zM1 6h1v1h-1zM8 6h1v1h-1zM12 6h1v1h-1zM17 6h1v1h-1zM31 6h1v1h-1zM40 6h1v1h-1zM52 6h1v1h-1zM1 7h1v1h-1zM8 7h1v1h-1zM12 7h1v1h-1zM17 7h1v1h-1zM31 7h1v1h-1zM40 7h1v1h-1zM47 7h1v1h-1zM52 7h1v1h-1zM1 8h1v1h-1zM5 8h1v1h-1zM8 8h1v1h-1zM12 8h1v1h-1zM17 8h1v1h-1zM31 8h1v1h-1zM41 8h1v1h-1zM46 8h1v1h-1zM52 8h1v1h-1zM2 9h3v1h-3zM8 9h1v1h-1zM12 9h1v1h-1zM16 9h3v1h-3zM31 9h1v1h-1zM42 9h4v1h-4zM52 9h1v1h-1zM31 10h3v1h-3zM50 10h3v1h-3z"/></svg>
<svg class="jt" style="left:16px;top:633px" width="45" height="13"><path fill="#804000" d="M9 1h4v1h-4zM17 1h2v1h-2zM31 1h1v1h-1zM9 2h1v1h-1zM16 2h1v1h-1zM19 2h1v1h-1zM30 2h2v1h-2zM9 3h1v1h-1zM16 3h2v1h-2zM19 3h1v1h-1zM31 3h1v1h-1zM9 4h3v1h-3zM19 4h1v1h-1zM31 4h1v1h-1zM2 5h4v1h-4zM9 5h1v1h-1zM12 5h1v1h-1zM18 5h1v1h-1zM31 5h1v1h-1zM12 6h1v1h-1zM17 6h1v1h-1zM31 6h1v1h-1zM9 7h2v1h-2zM12 7h1v1h-1zM17 7h1v1h-1zM31 7h1v1h-1zM9 8h1v1h-1zM12 8h1v1h-1zM16 8h1v1h-1zM19 8h1v1h-1zM24 8h2v1h-2zM31 8h1v1h-1zM10 9h2v1h-2zM16 9h4v1h-4zM24 9h2v1h-2zM30 9h3v1h-3z"/></svg>
<svg class="jt" style="left:181px;top:607px" width="115" height="13"><path fill="#00007a" d="M54 0h1v1h-1zM64 0h1v1h-1zM75 0h1v1h-1zM99 0h1v1h-1zM1 1h1v1h-1zM5 1h1v1h-1zM8 1h4v1h-4zM15 1h5v1h-5zM31 1h2v1h-2zM38 1h2v1h-2zM46 1h1v1h-1zM53 1h1v1h-1zM57 1h4v1h-4zM65 1h1v1h-1zM74 1h1v1h-1zM87 1h1v1h-1zM94 1h2v1h-2zM100 1h1v1h-1zM1 2h2v1h-2zM4 2h2v1h-2zM9 2h1v1h-1zM12 2h1v1h-1zM16 2h1v1h-1zM19 2h1v1h-1zM30 2h1v1h-1zM33 2h1v1h-1zM37 2h1v1h-1zM40 2h1v1h-1zM45 2h2v1h-2zM53 2h1v1h-1zM58 2h1v1h-1zM61 2h1v1h-1zM65 2h1v1h-1zM74 2h1v1h-1zM86 2h2v1h-2zM93 2h1v1h-1zM96 2h1v1h-1zM100 2h1v1h-1zM1 3h2v1h-2zM4 3h2v1h-2zM9 3h1v1h-1zM12 3h1v1h-1zM16 3h1v1h-1zM30 3h2v1h-2zM33 3h1v1h-1zM37 3h1v1h-1zM40 3h1v1h-1zM45 3h2v1h-2zM52 3h1v1h-1zM58 3h1v1h-1zM61 3h1v1h-1zM66 3h1v1h-1zM73 3h1v1h-1zM80 3h1v1h-1zM87 3h1v1h-1zM93 3h1v1h-1zM96 3h1v1h-1zM101 3h1v1h-1zM1 4h1v1h-1zM3 4h1v1h-1zM5 4h1v1h-1zM9 4h1v1h-1zM12 4h1v1h-1zM16 4h1v1h-1zM18 4h1v1h-1zM33 4h1v1h-1zM37 4h1v1h-1zM40 4h1v1h-1zM44 4h1v1h-1zM46 4h1v1h-1zM52 4h1v1h-1zM58 4h1v1h-1zM61 4h1v1h-1zM66 4h1v1h-1zM73 4h1v1h-1zM80 4h1v1h-1zM87 4h1v1h-1zM93 4h1v1h-1zM96 4h1v1h-1zM101 4h1v1h-1zM1 5h1v1h-1zM3 5h1v1h-1zM5 5h1v1h-1zM9 5h1v1h-1zM12 5h1v1h-1zM16 5h3v1h-3zM23 5h4v1h-4zM31 5h2v1h-2zM38 5h3v1h-3zM44 5h1v1h-1zM46 5h1v1h-1zM52 5h1v1h-1zM58 5h3v1h-3zM66 5h1v1h-1zM73 5h1v1h-1zM78 5h5v1h-5zM87 5h1v1h-1zM93 5h1v1h-1zM96 5h1v1h-1zM101 5h1v1h-1zM1 6h1v1h-1zM3 6h1v1h-1zM5 6h1v1h-1zM9 6h1v1h-1zM12 6h1v1h-1zM16 6h1v1h-1zM18 6h1v1h-1zM33 6h1v1h-1zM40 6h1v1h-1zM43 6h1v1h-1zM46 6h1v1h-1zM52 6h1v1h-1zM58 6h1v1h-1zM60 6h1v1h-1zM66 6h1v1h-1zM73 6h1v1h-1zM80 6h1v1h-1zM87 6h1v1h-1zM93 6h1v1h-1zM96 6h1v1h-1zM101 6h1v1h-1zM1 7h1v1h-1zM3 7h1v1h-1zM5 7h1v1h-1zM9 7h1v1h-1zM12 7h1v1h-1zM16 7h1v1h-1zM30 7h2v1h-2zM33 7h1v1h-1zM37 7h2v1h-2zM40 7h1v1h-1zM43 7h5v1h-5zM52 7h1v1h-1zM58 7h1v1h-1zM61 7h1v1h-1zM66 7h1v1h-1zM73 7h1v1h-1zM80 7h1v1h-1zM87 7h1v1h-1zM93 7h1v1h-1zM96 7h1v1h-1zM101 7h1v1h-1zM1 8h1v1h-1zM5 8h1v1h-1zM9 8h1v1h-1zM12 8h1v1h-1zM16 8h1v1h-1zM30 8h1v1h-1zM33 8h1v1h-1zM37 8h1v1h-1zM40 8h1v1h-1zM46 8h1v1h-1zM53 8h1v1h-1zM58 8h1v1h-1zM61 8h1v1h-1zM65 8h1v1h-1zM74 8h1v1h-1zM87 8h1v1h-1zM93 8h1v1h-1zM96 8h1v1h-1zM100 8h1v1h-1zM1 9h1v1h-1zM5 9h1v1h-1zM8 9h4v1h-4zM15 9h3v1h-3zM31 9h2v1h-2zM38 9h2v1h-2zM45 9h3v1h-3zM53 9h1v1h-1zM57 9h2v1h-2zM61 9h1v1h-1zM65 9h1v1h-1zM74 9h1v1h-1zM86 9h3v1h-3zM94 9h2v1h-2zM100 9h1v1h-1zM54 10h1v1h-1zM64 10h1v1h-1zM75 10h1v1h-1zM99 10h1v1h-1z"/></svg>
<svg class="jt" style="left:181px;top:620px" width="66" height="13"><path fill="#00007a" d="M31 0h3v1h-3zM50 0h3v1h-3zM2 1h3v1h-3zM8 1h1v1h-1zM12 1h1v1h-1zM17 1h2v1h-2zM31 1h1v1h-1zM38 1h1v1h-1zM42 1h4v1h-4zM47 1h1v1h-1zM52 1h1v1h-1zM1 2h1v1h-1zM5 2h1v1h-1zM8 2h1v1h-1zM12 2h1v1h-1zM16 2h1v1h-1zM19 2h1v1h-1zM31 2h1v1h-1zM37 2h1v1h-1zM39 2h1v1h-1zM41 2h1v1h-1zM46 2h2v1h-2zM52 2h1v1h-1zM1 3h1v1h-1zM8 3h1v1h-1zM12 3h1v1h-1zM16 3h2v1h-2zM19 3h1v1h-1zM31 3h1v1h-1zM38 3h1v1h-1zM40 3h1v1h-1zM47 3h1v1h-1zM52 3h1v1h-1zM1 4h1v1h-1zM8 4h1v1h-1zM12 4h1v1h-1zM19 4h1v1h-1zM31 4h1v1h-1zM40 4h1v1h-1zM52 4h1v1h-1zM1 5h1v1h-1zM8 5h5v1h-5zM18 5h1v1h-1zM31 5h1v1h-1zM40 5h1v1h-1zM52 5h1v1h-1zM1 6h1v1h-1zM8 6h1v1h-1zM12 6h1v1h-1zM17 6h1v1h-1zM31 6h1v1h-1zM40 6h1v1h-1zM52 6h1v1h-1zM1 7h1v1h-1zM8 7h1v1h-1zM12 7h1v1h-1zM17 7h1v1h-1zM31 7h1v1h-1zM40 7h1v1h-1zM47 7h1v1h-1zM52 7h1v1h-1zM1 8h1v1h-1zM5 8h1v1h-1zM8 8h1v1h-1zM12 8h1v1h-1zM16 8h1v1h-1zM19 8h1v1h-1zM31 8h1v1h-1zM41 8h1v1h-1zM46 8h1v1h-1zM52 8h1v1h-1zM2 9h3v1h-3zM8 9h1v1h-1zM12 9h1v1h-1zM16 9h4v1h-4zM31 9h1v1h-1zM42 9h4v1h-4zM52 9h1v1h-1zM31 10h3v1h-3zM50 10h3v1h-3z"/></svg>
<svg class="jt" style="left:181px;top:633px" width="45" height="13"><path fill="#00007a" d="M10 1h2v1h-2zM18 1h1v1h-1zM30 1h4v1h-4zM9 2h1v1h-1zM12 2h1v1h-1zM17 2h2v1h-2zM30 2h1v1h-1zM33 2h1v1h-1zM9 3h1v1h-1zM12 3h1v1h-1zM17 3h2v1h-2zM33 3h1v1h-1zM9 4h1v1h-1zM12 4h1v1h-1zM16 4h1v1h-1zM18 4h1v1h-1zM32 4h1v1h-1zM2 5h4v1h-4zM10 5h2v1h-2zM16 5h1v1h-1zM18 5h1v1h-1zM32 5h1v1h-1zM9 6h1v1h-1zM12 6h1v1h-1zM15 6h1v1h-1zM18 6h1v1h-1zM32 6h1v1h-1zM9 7h1v1h-1zM12 7h1v1h-1zM15 7h5v1h-5zM31 7h1v1h-1zM9 8h1v1h-1zM12 8h1v1h-1zM18 8h1v1h-1zM24 8h2v1h-2zM31 8h1v1h-1zM10 9h2v1h-2zM17 9h3v1h-3zM24 9h2v1h-2zM31 9h1v1h-1z"/></svg>
<svg class="jt" style="left:346px;top:620px" width="66" height="13"><path fill="#00803c" d="M31 0h3v1h-3zM50 0h3v1h-3zM2 1h3v1h-3zM8 1h1v1h-1zM12 1h1v1h-1zM17 1h2v1h-2zM31 1h1v1h-1zM38 1h1v1h-1zM42 1h4v1h-4zM47 1h1v1h-1zM52 1h1v1h-1zM1 2h1v1h-1zM5 2h1v1h-1zM8 2h1v1h-1zM12 2h1v1h-1zM16 2h1v1h-1zM19 2h1v1h-1zM31 2h1v1h-1zM37 2h1v1h-1zM39 2h1v1h-1zM41 2h1v1h-1zM46 2h2v1h-2zM52 2h1v1h-1zM1 3h1v1h-1zM8 3h1v1h-1zM12 3h1v1h-1zM16 3h2v1h-2zM19 3h1v1h-1zM31 3h1v1h-1zM38 3h1v1h-1zM40 3h1v1h-1zM47 3h1v1h-1zM52 3h1v1h-1zM1 4h1v1h-1zM8 4h1v1h-1zM12 4h1v1h-1zM19 4h1v1h-1zM31 4h1v1h-1zM40 4h1v1h-1zM52 4h1v1h-1zM1 5h1v1h-1zM8 5h5v1h-5zM17 5h2v1h-2zM31 5h1v1h-1zM40 5h1v1h-1zM52 5h1v1h-1zM1 6h1v1h-1zM8 6h1v1h-1zM12 6h1v1h-1zM19 6h1v1h-1zM31 6h1v1h-1zM40 6h1v1h-1zM52 6h1v1h-1zM1 7h1v1h-1zM8 7h1v1h-1zM12 7h1v1h-1zM16 7h2v1h-2zM19 7h1v1h-1zM31 7h1v1h-1zM40 7h1v1h-1zM47 7h1v1h-1zM52 7h1v1h-1zM1 8h1v1h-1zM5 8h1v1h-1zM8 8h1v1h-1zM12 8h1v1h-1zM16 8h1v1h-1zM19 8h1v1h-1zM31 8h1v1h-1zM41 8h1v1h-1zM46 8h1v1h-1zM52 8h1v1h-1zM2 9h3v1h-3zM8 9h1v1h-1zM12 9h1v1h-1zM17 9h2v1h-2zM31 9h1v1h-1zM42 9h4v1h-4zM52 9h1v1h-1zM31 10h3v1h-3zM50 10h3v1h-3z"/></svg>
<svg class="jt" style="left:346px;top:633px" width="45" height="13"><path fill="#00803c" d="M2 5h4v1h-4zM9 5h4v1h-4zM16 5h4v1h-4zM23 5h4v1h-4zM30 5h4v1h-4z"/></svg>
<svg class="jt" style="left:511px;top:607px" width="94" height="13"><path fill="#dc8a28" d="M68 0h1v1h-1zM78 0h1v1h-1zM1 1h1v1h-1zM5 1h1v1h-1zM8 1h4v1h-4zM15 1h5v1h-5zM31 1h2v1h-2zM38 1h2v1h-2zM46 1h1v1h-1zM52 1h1v1h-1zM57 1h5v1h-5zM67 1h1v1h-1zM71 1h3v1h-3zM79 1h1v1h-1zM1 2h2v1h-2zM4 2h2v1h-2zM9 2h1v1h-1zM12 2h1v1h-1zM16 2h1v1h-1zM19 2h1v1h-1zM30 2h1v1h-1zM33 2h1v1h-1zM37 2h1v1h-1zM40 2h1v1h-1zM45 2h2v1h-2zM52 2h1v1h-1zM57 2h1v1h-1zM59 2h1v1h-1zM61 2h1v1h-1zM67 2h1v1h-1zM72 2h1v1h-1zM79 2h1v1h-1zM1 3h2v1h-2zM4 3h2v1h-2zM9 3h1v1h-1zM12 3h1v1h-1zM16 3h1v1h-1zM30 3h2v1h-2zM33 3h1v1h-1zM37 3h1v1h-1zM40 3h1v1h-1zM45 3h2v1h-2zM51 3h1v1h-1zM53 3h1v1h-1zM59 3h1v1h-1zM66 3h1v1h-1zM72 3h1v1h-1zM80 3h1v1h-1zM1 4h1v1h-1zM3 4h1v1h-1zM5 4h1v1h-1zM9 4h1v1h-1zM12 4h1v1h-1zM16 4h1v1h-1zM18 4h1v1h-1zM33 4h1v1h-1zM37 4h1v1h-1zM40 4h1v1h-1zM44 4h1v1h-1zM46 4h1v1h-1zM51 4h1v1h-1zM53 4h1v1h-1zM59 4h1v1h-1zM66 4h1v1h-1zM72 4h1v1h-1zM80 4h1v1h-1zM1 5h1v1h-1zM3 5h1v1h-1zM5 5h1v1h-1zM9 5h1v1h-1zM12 5h1v1h-1zM16 5h3v1h-3zM23 5h4v1h-4zM31 5h2v1h-2zM38 5h3v1h-3zM44 5h1v1h-1zM46 5h1v1h-1zM51 5h1v1h-1zM53 5h1v1h-1zM59 5h1v1h-1zM66 5h1v1h-1zM72 5h1v1h-1zM80 5h1v1h-1zM1 6h1v1h-1zM3 6h1v1h-1zM5 6h1v1h-1zM9 6h1v1h-1zM12 6h1v1h-1zM16 6h1v1h-1zM18 6h1v1h-1zM33 6h1v1h-1zM40 6h1v1h-1zM43 6h1v1h-1zM46 6h1v1h-1zM50 6h1v1h-1zM54 6h1v1h-1zM59 6h1v1h-1zM66 6h1v1h-1zM72 6h1v1h-1zM80 6h1v1h-1zM1 7h1v1h-1zM3 7h1v1h-1zM5 7h1v1h-1zM9 7h1v1h-1zM12 7h1v1h-1zM16 7h1v1h-1zM30 7h2v1h-2zM33 7h1v1h-1zM37 7h2v1h-2zM40 7h1v1h-1zM43 7h5v1h-5zM50 7h5v1h-5zM59 7h1v1h-1zM66 7h1v1h-1zM72 7h1v1h-1zM80 7h1v1h-1zM1 8h1v1h-1zM5 8h1v1h-1zM9 8h1v1h-1zM12 8h1v1h-1zM16 8h1v1h-1zM30 8h1v1h-1zM33 8h1v1h-1zM37 8h1v1h-1zM40 8h1v1h-1zM46 8h1v1h-1zM50 8h1v1h-1zM54 8h1v1h-1zM59 8h1v1h-1zM67 8h1v1h-1zM72 8h1v1h-1zM75 8h1v1h-1zM79 8h1v1h-1zM1 9h1v1h-1zM5 9h1v1h-1zM8 9h4v1h-4zM15 9h3v1h-3zM31 9h2v1h-2zM38 9h2v1h-2zM45 9h3v1h-3zM50 9h1v1h-1zM54 9h1v1h-1zM58 9h3v1h-3zM67 9h1v1h-1zM71 9h5v1h-5zM79 9h1v1h-1zM68 10h1v1h-1zM78 10h1v1h-1z"/></svg>
<svg class="jt" style="left:511px;top:620px" width="66" height="13"><path fill="#dc8a28" d="M31 0h3v1h-3zM50 0h3v1h-3zM2 1h3v1h-3zM8 1h1v1h-1zM12 1h1v1h-1zM18 1h1v1h-1zM31 1h1v1h-1zM38 1h1v1h-1zM42 1h4v1h-4zM47 1h1v1h-1zM52 1h1v1h-1zM1 2h1v1h-1zM5 2h1v1h-1zM8 2h1v1h-1zM12 2h1v1h-1zM17 2h2v1h-2zM31 2h1v1h-1zM37 2h1v1h-1zM39 2h1v1h-1zM41 2h1v1h-1zM46 2h2v1h-2zM52 2h1v1h-1zM1 3h1v1h-1zM8 3h1v1h-1zM12 3h1v1h-1zM17 3h2v1h-2zM31 3h1v1h-1zM38 3h1v1h-1zM40 3h1v1h-1zM47 3h1v1h-1zM52 3h1v1h-1zM1 4h1v1h-1zM8 4h1v1h-1zM12 4h1v1h-1zM16 4h1v1h-1zM18 4h1v1h-1zM31 4h1v1h-1zM40 4h1v1h-1zM52 4h1v1h-1zM1 5h1v1h-1zM8 5h5v1h-5zM16 5h1v1h-1zM18 5h1v1h-1zM31 5h1v1h-1zM40 5h1v1h-1zM52 5h1v1h-1zM1 6h1v1h-1zM8 6h1v1h-1zM12 6h1v1h-1zM15 6h1v1h-1zM18 6h1v1h-1zM31 6h1v1h-1zM40 6h1v1h-1zM52 6h1v1h-1zM1 7h1v1h-1zM8 7h1v1h-1zM12 7h1v1h-1zM15 7h5v1h-5zM31 7h1v1h-1zM40 7h1v1h-1zM47 7h1v1h-1zM52 7h1v1h-1zM1 8h1v1h-1zM5 8h1v1h-1zM8 8h1v1h-1zM12 8h1v1h-1zM18 8h1v1h-1zM31 8h1v1h-1zM41 8h1v1h-1zM46 8h1v1h-1zM52 8h1v1h-1zM2 9h3v1h-3zM8 9h1v1h-1zM12 9h1v1h-1zM17 9h3v1h-3zM31 9h1v1h-1zM42 9h4v1h-4zM52 9h1v1h-1zM31 10h3v1h-3zM50 10h3v1h-3z"/></svg>
<svg class="jt" style="left:511px;top:633px" width="45" height="13"><path fill="#dc8a28" d="M10 1h2v1h-2zM17 1h1v1h-1zM31 1h2v1h-2zM9 2h1v1h-1zM12 2h1v1h-1zM16 2h2v1h-2zM30 2h1v1h-1zM33 2h1v1h-1zM9 3h1v1h-1zM12 3h1v1h-1zM17 3h1v1h-1zM30 3h2v1h-2zM33 3h1v1h-1zM9 4h1v1h-1zM12 4h1v1h-1zM17 4h1v1h-1zM33 4h1v1h-1zM2 5h4v1h-4zM10 5h2v1h-2zM17 5h1v1h-1zM31 5h2v1h-2zM9 6h1v1h-1zM12 6h1v1h-1zM17 6h1v1h-1zM33 6h1v1h-1zM9 7h1v1h-1zM12 7h1v1h-1zM17 7h1v1h-1zM30 7h2v1h-2zM33 7h1v1h-1zM9 8h1v1h-1zM12 8h1v1h-1zM17 8h1v1h-1zM24 8h2v1h-2zM30 8h1v1h-1zM33 8h1v1h-1zM10 9h2v1h-2zM16 9h3v1h-3zM24 9h2v1h-2zM31 9h2v1h-2z"/></svg>
<svg class="jt" style="left:676px;top:607px" width="94" height="13"><path fill="#c00000" d="M54 0h1v1h-1zM78 0h1v1h-1zM1 1h1v1h-1zM5 1h1v1h-1zM8 1h4v1h-4zM15 1h5v1h-5zM31 1h2v1h-2zM38 1h2v1h-2zM45 1h2v1h-2zM53 1h1v1h-1zM66 1h2v1h-2zM73 1h2v1h-2zM79 1h1v1h-1zM1 2h2v1h-2zM4 2h2v1h-2zM9 2h1v1h-1zM12 2h1v1h-1zM16 2h1v1h-1zM19 2h1v1h-1zM30 2h1v1h-1zM33 2h1v1h-1zM37 2h1v1h-1zM40 2h1v1h-1zM44 2h1v1h-1zM47 2h1v1h-1zM53 2h1v1h-1zM65 2h1v1h-1zM68 2h1v1h-1zM72 2h1v1h-1zM75 2h1v1h-1zM79 2h1v1h-1zM1 3h2v1h-2zM4 3h2v1h-2zM9 3h1v1h-1zM12 3h1v1h-1zM16 3h1v1h-1zM30 3h2v1h-2zM33 3h1v1h-1zM37 3h1v1h-1zM40 3h1v1h-1zM44 3h2v1h-2zM47 3h1v1h-1zM52 3h1v1h-1zM59 3h1v1h-1zM65 3h2v1h-2zM68 3h1v1h-1zM72 3h1v1h-1zM75 3h1v1h-1zM80 3h1v1h-1zM1 4h1v1h-1zM3 4h1v1h-1zM5 4h1v1h-1zM9 4h1v1h-1zM12 4h1v1h-1zM16 4h1v1h-1zM18 4h1v1h-1zM33 4h1v1h-1zM37 4h1v1h-1zM40 4h1v1h-1zM47 4h1v1h-1zM52 4h1v1h-1zM59 4h1v1h-1zM68 4h1v1h-1zM72 4h1v1h-1zM75 4h1v1h-1zM80 4h1v1h-1zM1 5h1v1h-1zM3 5h1v1h-1zM5 5h1v1h-1zM9 5h1v1h-1zM12 5h1v1h-1zM16 5h3v1h-3zM23 5h4v1h-4zM31 5h2v1h-2zM38 5h2v1h-2zM46 5h1v1h-1zM52 5h1v1h-1zM57 5h5v1h-5zM67 5h1v1h-1zM72 5h1v1h-1zM75 5h1v1h-1zM80 5h1v1h-1zM1 6h1v1h-1zM3 6h1v1h-1zM5 6h1v1h-1zM9 6h1v1h-1zM12 6h1v1h-1zM16 6h1v1h-1zM18 6h1v1h-1zM33 6h1v1h-1zM37 6h1v1h-1zM40 6h1v1h-1zM45 6h1v1h-1zM52 6h1v1h-1zM59 6h1v1h-1zM66 6h1v1h-1zM72 6h1v1h-1zM75 6h1v1h-1zM80 6h1v1h-1zM1 7h1v1h-1zM3 7h1v1h-1zM5 7h1v1h-1zM9 7h1v1h-1zM12 7h1v1h-1zM16 7h1v1h-1zM30 7h2v1h-2zM33 7h1v1h-1zM37 7h1v1h-1zM40 7h1v1h-1zM45 7h1v1h-1zM52 7h1v1h-1zM59 7h1v1h-1zM66 7h1v1h-1zM72 7h1v1h-1zM75 7h1v1h-1zM80 7h1v1h-1zM1 8h1v1h-1zM5 8h1v1h-1zM9 8h1v1h-1zM12 8h1v1h-1zM16 8h1v1h-1zM30 8h1v1h-1zM33 8h1v1h-1zM37 8h1v1h-1zM40 8h1v1h-1zM44 8h1v1h-1zM47 8h1v1h-1zM53 8h1v1h-1zM65 8h1v1h-1zM68 8h1v1h-1zM72 8h1v1h-1zM75 8h1v1h-1zM79 8h1v1h-1zM1 9h1v1h-1zM5 9h1v1h-1zM8 9h4v1h-4zM15 9h3v1h-3zM31 9h2v1h-2zM38 9h2v1h-2zM44 9h4v1h-4zM53 9h1v1h-1zM65 9h4v1h-4zM73 9h2v1h-2zM79 9h1v1h-1zM54 10h1v1h-1zM78 10h1v1h-1z"/></svg>
<svg class="jt" style="left:676px;top:620px" width="66" height="13"><path fill="#c00000" d="M31 0h3v1h-3zM50 0h3v1h-3zM2 1h3v1h-3zM8 1h1v1h-1zM12 1h1v1h-1zM16 1h4v1h-4zM31 1h1v1h-1zM38 1h1v1h-1zM42 1h4v1h-4zM47 1h1v1h-1zM52 1h1v1h-1zM1 2h1v1h-1zM5 2h1v1h-1zM8 2h1v1h-1zM12 2h1v1h-1zM16 2h1v1h-1zM31 2h1v1h-1zM37 2h1v1h-1zM39 2h1v1h-1zM41 2h1v1h-1zM46 2h2v1h-2zM52 2h1v1h-1zM1 3h1v1h-1zM8 3h1v1h-1zM12 3h1v1h-1zM16 3h1v1h-1zM31 3h1v1h-1zM38 3h1v1h-1zM40 3h1v1h-1zM47 3h1v1h-1zM52 3h1v1h-1zM1 4h1v1h-1zM8 4h1v1h-1zM12 4h1v1h-1zM16 4h3v1h-3zM31 4h1v1h-1zM40 4h1v1h-1zM52 4h1v1h-1zM1 5h1v1h-1zM8 5h5v1h-5zM16 5h1v1h-1zM19 5h1v1h-1zM31 5h1v1h-1zM40 5h1v1h-1zM52 5h1v1h-1zM1 6h1v1h-1zM8 6h1v1h-1zM12 6h1v1h-1zM19 6h1v1h-1zM31 6h1v1h-1zM40 6h1v1h-1zM52 6h1v1h-1zM1 7h1v1h-1zM8 7h1v1h-1zM12 7h1v1h-1zM16 7h2v1h-2zM19 7h1v1h-1zM31 7h1v1h-1zM40 7h1v1h-1zM47 7h1v1h-1zM52 7h1v1h-1zM1 8h1v1h-1zM5 8h1v1h-1zM8 8h1v1h-1zM12 8h1v1h-1zM16 8h1v1h-1zM19 8h1v1h-1zM31 8h1v1h-1zM41 8h1v1h-1zM46 8h1v1h-1zM52 8h1v1h-1zM2 9h3v1h-3zM8 9h1v1h-1zM12 9h1v1h-1zM17 9h2v1h-2zM31 9h1v1h-1zM42 9h4v1h-4zM52 9h1v1h-1zM31 10h3v1h-3zM50 10h3v1h-3z"/></svg>
<svg class="jt" style="left:676px;top:633px" width="45" height="13"><path fill="#c00000" d="M10 1h2v1h-2zM17 1h2v1h-2zM31 1h1v1h-1zM9 2h1v1h-1zM12 2h1v1h-1zM16 2h1v1h-1zM19 2h1v1h-1zM30 2h2v1h-2zM9 3h1v1h-1zM11 3h2v1h-2zM16 3h2v1h-2zM19 3h1v1h-1zM31 3h1v1h-1zM9 4h1v1h-1zM19 4h1v1h-1zM31 4h1v1h-1zM2 5h4v1h-4zM9 5h3v1h-3zM18 5h1v1h-1zM31 5h1v1h-1zM9 6h1v1h-1zM12 6h1v1h-1zM17 6h1v1h-1zM31 6h1v1h-1zM9 7h1v1h-1zM12 7h1v1h-1zM17 7h1v1h-1zM31 7h1v1h-1zM9 8h1v1h-1zM12 8h1v1h-1zM16 8h1v1h-1zM19 8h1v1h-1zM24 8h2v1h-2zM31 8h1v1h-1zM10 9h2v1h-2zM16 9h4v1h-4zM24 9h2v1h-2zM30 9h3v1h-3z"/></svg>
<svg class="jt" style="left:841px;top:607px" width="59" height="13"><path fill="#007878" d="M1 1h1v1h-1zM5 1h1v1h-1zM8 1h4v1h-4zM15 1h5v1h-5zM32 1h1v1h-1zM38 1h2v1h-2zM44 1h4v1h-4zM1 2h2v1h-2zM4 2h2v1h-2zM9 2h1v1h-1zM12 2h1v1h-1zM16 2h1v1h-1zM19 2h1v1h-1zM31 2h2v1h-2zM37 2h1v1h-1zM40 2h1v1h-1zM44 2h1v1h-1zM47 2h1v1h-1zM1 3h2v1h-2zM4 3h2v1h-2zM9 3h1v1h-1zM12 3h1v1h-1zM16 3h1v1h-1zM31 3h2v1h-2zM37 3h2v1h-2zM40 3h1v1h-1zM47 3h1v1h-1zM1 4h1v1h-1zM3 4h1v1h-1zM5 4h1v1h-1zM9 4h1v1h-1zM12 4h1v1h-1zM16 4h1v1h-1zM18 4h1v1h-1zM30 4h1v1h-1zM32 4h1v1h-1zM40 4h1v1h-1zM46 4h1v1h-1zM1 5h1v1h-1zM3 5h1v1h-1zM5 5h1v1h-1zM9 5h1v1h-1zM12 5h1v1h-1zM16 5h3v1h-3zM23 5h4v1h-4zM30 5h1v1h-1zM32 5h1v1h-1zM38 5h2v1h-2zM46 5h1v1h-1zM1 6h1v1h-1zM3 6h1v1h-1zM5 6h1v1h-1zM9 6h1v1h-1zM12 6h1v1h-1zM16 6h1v1h-1zM18 6h1v1h-1zM29 6h1v1h-1zM32 6h1v1h-1zM40 6h1v1h-1zM46 6h1v1h-1zM1 7h1v1h-1zM3 7h1v1h-1zM5 7h1v1h-1zM9 7h1v1h-1zM12 7h1v1h-1zM16 7h1v1h-1zM29 7h5v1h-5zM37 7h2v1h-2zM40 7h1v1h-1zM45 7h1v1h-1zM1 8h1v1h-1zM5 8h1v1h-1zM9 8h1v1h-1zM12 8h1v1h-1zM16 8h1v1h-1zM32 8h1v1h-1zM37 8h1v1h-1zM40 8h1v1h-1zM45 8h1v1h-1zM1 9h1v1h-1zM5 9h1v1h-1zM8 9h4v1h-4zM15 9h3v1h-3zM31 9h3v1h-3zM38 9h2v1h-2zM45 9h1v1h-1z"/></svg>
<svg class="jt" style="left:841px;top:620px" width="66" height="13"><path fill="#007878" d="M31 0h3v1h-3zM50 0h3v1h-3zM2 1h3v1h-3zM8 1h1v1h-1zM12 1h1v1h-1zM17 1h2v1h-2zM31 1h1v1h-1zM38 1h1v1h-1zM42 1h4v1h-4zM47 1h1v1h-1zM52 1h1v1h-1zM1 2h1v1h-1zM5 2h1v1h-1zM8 2h1v1h-1zM12 2h1v1h-1zM16 2h1v1h-1zM19 2h1v1h-1zM31 2h1v1h-1zM37 2h1v1h-1zM39 2h1v1h-1zM41 2h1v1h-1zM46 2h2v1h-2zM52 2h1v1h-1zM1 3h1v1h-1zM8 3h1v1h-1zM12 3h1v1h-1zM16 3h1v1h-1zM18 3h2v1h-2zM31 3h1v1h-1zM38 3h1v1h-1zM40 3h1v1h-1zM47 3h1v1h-1zM52 3h1v1h-1zM1 4h1v1h-1zM8 4h1v1h-1zM12 4h1v1h-1zM16 4h1v1h-1zM31 4h1v1h-1zM40 4h1v1h-1zM52 4h1v1h-1zM1 5h1v1h-1zM8 5h5v1h-5zM16 5h3v1h-3zM31 5h1v1h-1zM40 5h1v1h-1zM52 5h1v1h-1zM1 6h1v1h-1zM8 6h1v1h-1zM12 6h1v1h-1zM16 6h1v1h-1zM19 6h1v1h-1zM31 6h1v1h-1zM40 6h1v1h-1zM52 6h1v1h-1zM1 7h1v1h-1zM8 7h1v1h-1zM12 7h1v1h-1zM16 7h1v1h-1zM19 7h1v1h-1zM31 7h1v1h-1zM40 7h1v1h-1zM47 7h1v1h-1zM52 7h1v1h-1zM1 8h1v1h-1zM5 8h1v1h-1zM8 8h1v1h-1zM12 8h1v1h-1zM16 8h1v1h-1zM19 8h1v1h-1zM31 8h1v1h-1zM41 8h1v1h-1zM46 8h1v1h-1zM52 8h1v1h-1zM2 9h3v1h-3zM8 9h1v1h-1zM12 9h1v1h-1zM17 9h2v1h-2zM31 9h1v1h-1zM42 9h4v1h-4zM52 9h1v1h-1zM31 10h3v1h-3zM50 10h3v1h-3z"/></svg>
<svg class="jt" style="left:841px;top:633px" width="45" height="13"><path fill="#007878" d="M10 1h2v1h-2zM17 1h2v1h-2zM30 1h4v1h-4zM9 2h1v1h-1zM12 2h1v1h-1zM16 2h1v1h-1zM19 2h1v1h-1zM30 2h1v1h-1zM33 2h1v1h-1zM9 3h2v1h-2zM12 3h1v1h-1zM16 3h2v1h-2zM19 3h1v1h-1zM33 3h1v1h-1zM12 4h1v1h-1zM19 4h1v1h-1zM32 4h1v1h-1zM2 5h4v1h-4zM11 5h1v1h-1zM18 5h1v1h-1zM32 5h1v1h-1zM10 6h1v1h-1zM17 6h1v1h-1zM32 6h1v1h-1zM10 7h1v1h-1zM17 7h1v1h-1zM31 7h1v1h-1zM9 8h1v1h-1zM12 8h1v1h-1zM16 8h1v1h-1zM19 8h1v1h-1zM24 8h2v1h-2zM31 8h1v1h-1zM9 9h4v1h-4zM16 9h4v1h-4zM24 9h2v1h-2zM31 9h1v1h-1z"/></svg>
</body></html>
